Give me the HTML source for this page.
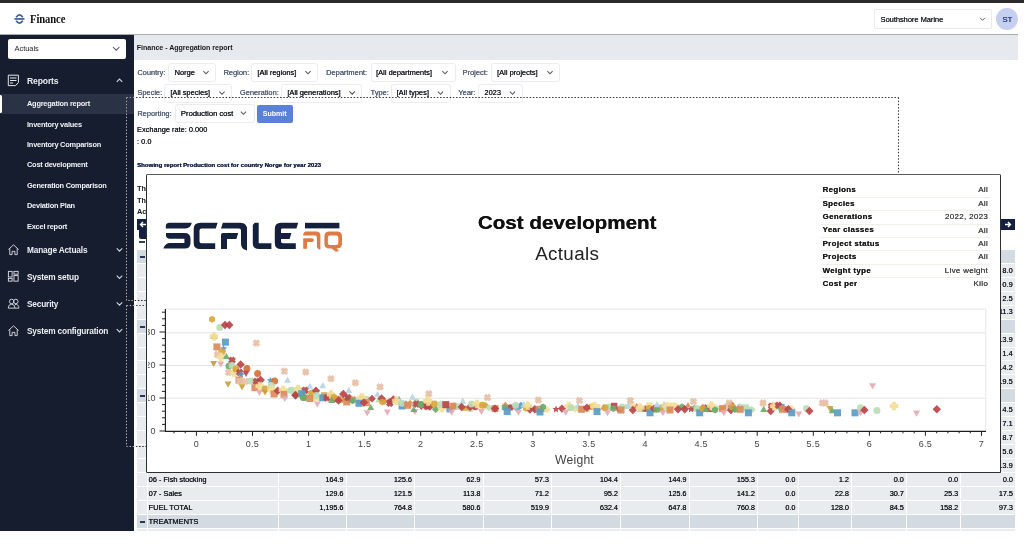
<!DOCTYPE html>
<html><head><meta charset="utf-8">
<style>
*{box-sizing:border-box}
html,body{margin:0;padding:0}
body{width:1024px;height:560px;overflow:hidden;position:relative;background:#fff;font-family:"Liberation Sans",sans-serif;color:#1b1f2a}
.a{position:absolute;white-space:nowrap;line-height:1}
svg.a{line-height:normal}
</style></head><body>
<div class="a" style="left:0px;top:0px;width:1024px;height:3px;background:#2b2b2b;"></div>
<div class="a" style="left:0px;top:34px;width:1018px;height:1px;background:#a9adb2;"></div>
<svg class="a" style="left:13px;top:12px" width="13" height="14" viewBox="0 0 13 14">
<path d="M3.2 5.2 Q6.5 0.6 9.8 5.2" fill="none" stroke="#3f5c8c" stroke-width="1.7"/>
<rect x="1.5" y="6.1" width="10" height="1.7" fill="#3f5c8c"/>
<path d="M3.2 8.8 Q6.5 13.4 9.8 8.8" fill="none" stroke="#3f5c8c" stroke-width="1.7"/>
</svg>
<div class="a" style="left:30.30px;top:12.57px;font-size:12.2px;color:#111;font-weight:bold;letter-spacing:-0.1px;font-family:'Liberation Serif',serif;transform:scaleX(0.87);transform-origin:0 0">Finance</div>
<div class="a" style="left:874px;top:9px;width:118px;height:20px;border:1px solid #e8eaee;border-radius:2px;background:#fff"></div>
<div class="a" style="left:880.50px;top:15.65px;font-size:7.5px;color:#22252c;font-weight:normal;letter-spacing:-0.05px;text-shadow:0.3px 0 0 #22252c">Southshore Marine</div>
<svg class="a" style="left:0;top:0;overflow:visible" width="1" height="1"><path d="M980.0 17.75 L982.5 20.25 L985.0 17.75" fill="none" stroke="#666" stroke-width="1"/></svg>
<div class="a" style="left:996.2px;top:8.1px;width:21.9px;height:21.9px;border-radius:50%;background:#c5d0f0"></div>
<div class="a" style="left:807.20px;width:400px;text-align:center;top:15.87px;font-size:7.6px;color:#33427a;font-weight:normal;letter-spacing:0px;text-shadow:0.45px 0 0 #33427a">ST</div>
<div class="a" style="left:0px;top:35px;width:134px;height:496px;background:#151d2f;"></div>
<div class="a" style="left:8px;top:39px;width:118px;height:19.5px;border-radius:2px;background:#fff"></div>
<div class="a" style="left:14.50px;top:45.15px;font-size:7.5px;color:#262626;font-weight:normal;letter-spacing:-0.05px;">Actuals</div>
<svg class="a" style="left:0;top:0;overflow:visible" width="1" height="1"><path d="M113.0 47.0 L116.2 50.2 L119.4 47.0" fill="none" stroke="#555" stroke-width="1.05"/></svg>
<svg class="a" style="left:7px;top:74px" width="14" height="13" viewBox="0 0 14 13">
<path d="M1.3 1.2 H11.4 V8.6 L8.6 11.6 H1.3 Z" fill="none" stroke="#e6e8ee" stroke-width="1"/>
<path d="M3 4 H9.5 M3 6.5 H9.5 M3 9 H6" stroke="#e6e8ee" stroke-width="1"/>
</svg>
<div class="a" style="left:27.00px;top:76.72px;font-size:8.6px;color:#eceef3;font-weight:bold;letter-spacing:-0.15px;">Reports</div>
<svg class="a" style="left:0;top:0;overflow:visible" width="1" height="1"><path d="M116.75 81.875 L119.5 79.125 L122.25 81.875" fill="none" stroke="#d0d4dc" stroke-width="1.1"/></svg>
<div class="a" style="left:0px;top:94px;width:134px;height:20px;background:#2a3246;"></div>
<div class="a" style="left:0;top:95px;width:2px;height:18px;background:#fff;border-radius:0 1.5px 1.5px 0"></div>
<div class="a" style="left:27.00px;top:100.04px;font-size:7.4px;color:#f0f2f6;font-weight:bold;letter-spacing:-0.22px;">Aggregation report</div>
<div class="a" style="left:27.00px;top:120.54px;font-size:7.4px;color:#f0f2f6;font-weight:bold;letter-spacing:-0.22px;">Inventory values</div>
<div class="a" style="left:27.00px;top:141.04px;font-size:7.4px;color:#f0f2f6;font-weight:bold;letter-spacing:-0.22px;">Inventory Comparison</div>
<div class="a" style="left:27.00px;top:161.44px;font-size:7.4px;color:#f0f2f6;font-weight:bold;letter-spacing:-0.22px;">Cost development</div>
<div class="a" style="left:27.00px;top:181.84px;font-size:7.4px;color:#f0f2f6;font-weight:bold;letter-spacing:-0.22px;">Generation Comparison</div>
<div class="a" style="left:27.00px;top:202.24px;font-size:7.4px;color:#f0f2f6;font-weight:bold;letter-spacing:-0.22px;">Deviation Plan</div>
<div class="a" style="left:27.00px;top:222.64px;font-size:7.4px;color:#f0f2f6;font-weight:bold;letter-spacing:-0.22px;">Excel report</div>
<div class="a" style="left:27.00px;top:245.97px;font-size:8.3px;color:#eceef3;font-weight:bold;letter-spacing:-0.18px;">Manage Actuals</div>
<svg class="a" style="left:0;top:0;overflow:visible" width="1" height="1"><path d="M116.75 248.425 L119.5 251.175 L122.25 248.425" fill="none" stroke="#d0d4dc" stroke-width="1.1"/></svg>
<svg class="a" style="left:7.3px;top:242.8px" width="13" height="13" viewBox="0 0 14 14">
<path d="M1.5 7 L7 2 L12.5 7 M3 5.8 V12.5 H5.5 V9 H8.5 V12.5 H11 V5.8" fill="none" stroke="#d8dbe3" stroke-width="1"/></svg>
<div class="a" style="left:27.00px;top:273.17px;font-size:8.3px;color:#eceef3;font-weight:bold;letter-spacing:-0.18px;">System setup</div>
<svg class="a" style="left:0;top:0;overflow:visible" width="1" height="1"><path d="M116.75 275.625 L119.5 278.375 L122.25 275.625" fill="none" stroke="#d0d4dc" stroke-width="1.1"/></svg>
<svg class="a" style="left:7.3px;top:270.0px" width="13" height="13" viewBox="0 0 14 14">
<rect x="1.5" y="1.5" width="4" height="6" fill="none" stroke="#d8dbe3" stroke-width="1"/>
<rect x="1.5" y="9" width="4" height="3" fill="none" stroke="#d8dbe3" stroke-width="1"/>
<rect x="7.5" y="1.5" width="4.5" height="3" fill="none" stroke="#d8dbe3" stroke-width="1"/>
<rect x="7.5" y="6" width="4.5" height="6" fill="none" stroke="#d8dbe3" stroke-width="1"/></svg>
<div class="a" style="left:27.00px;top:299.97px;font-size:8.3px;color:#eceef3;font-weight:bold;letter-spacing:-0.18px;">Security</div>
<svg class="a" style="left:0;top:0;overflow:visible" width="1" height="1"><path d="M116.75 302.425 L119.5 305.175 L122.25 302.425" fill="none" stroke="#d0d4dc" stroke-width="1.1"/></svg>
<svg class="a" style="left:7.3px;top:296.8px" width="13" height="13" viewBox="0 0 14 14">
<circle cx="5" cy="4.8" r="2.4" fill="none" stroke="#d8dbe3" stroke-width="1"/>
<circle cx="9.5" cy="4.8" r="2.4" fill="none" stroke="#d8dbe3" stroke-width="1"/>
<path d="M1.3 12 Q1.5 7.8 5 7.8 Q8.5 7.8 8.7 12 Z M8.5 8 Q12.7 7.6 12.8 12 H8.7" fill="none" stroke="#d8dbe3" stroke-width="1"/></svg>
<div class="a" style="left:27.00px;top:326.67px;font-size:8.3px;color:#eceef3;font-weight:bold;letter-spacing:-0.18px;">System configuration</div>
<svg class="a" style="left:0;top:0;overflow:visible" width="1" height="1"><path d="M116.75 329.125 L119.5 331.875 L122.25 329.125" fill="none" stroke="#d0d4dc" stroke-width="1.1"/></svg>
<svg class="a" style="left:7.3px;top:323.5px" width="13" height="13" viewBox="0 0 14 14">
<path d="M1.5 7 L7 2 L12.5 7 M3 5.8 V12.5 H5.5 V9 H8.5 V12.5 H11 V5.8" fill="none" stroke="#d8dbe3" stroke-width="1"/></svg>
<div class="a" style="left:134px;top:35px;width:884px;height:24.5px;background:#e6e9ed;"></div>
<div class="a" style="left:136.80px;top:44.89px;font-size:7.1px;color:#15181f;font-weight:bold;letter-spacing:-0.05px;">Finance - Aggregation report</div>
<div class="a" style="left:137.20px;top:69.09px;font-size:7.45px;color:#4f5c73;font-weight:normal;letter-spacing:0px;text-shadow:0.3px 0 0 currentColor">Country:</div>
<div class="a" style="left:167.5px;top:63.3px;width:48.5px;height:18.700000000000003px;border:1px solid #eaecef;border-radius:3px;background:#fff"></div>
<div class="a" style="left:174.50px;top:69.09px;font-size:7.45px;color:#15181f;font-weight:normal;letter-spacing:0px;text-shadow:0.3px 0 0 currentColor">Norge</div>
<svg class="a" style="left:0;top:0;overflow:visible" width="1" height="1"><path d="M203.4 71.2 L206 73.8 L208.6 71.2" fill="none" stroke="#555" stroke-width="1.05"/></svg>
<div class="a" style="left:223.40px;top:69.09px;font-size:7.45px;color:#4f5c73;font-weight:normal;letter-spacing:0px;text-shadow:0.3px 0 0 currentColor">Region:</div>
<div class="a" style="left:251px;top:63.3px;width:67px;height:18.700000000000003px;border:1px solid #eaecef;border-radius:3px;background:#fff"></div>
<div class="a" style="left:257.30px;top:69.09px;font-size:7.45px;color:#15181f;font-weight:normal;letter-spacing:0px;text-shadow:0.3px 0 0 currentColor">[All regions]</div>
<svg class="a" style="left:0;top:0;overflow:visible" width="1" height="1"><path d="M305.4 71.2 L308 73.8 L310.6 71.2" fill="none" stroke="#555" stroke-width="1.05"/></svg>
<div class="a" style="left:326.00px;top:69.09px;font-size:7.45px;color:#4f5c73;font-weight:normal;letter-spacing:0px;text-shadow:0.3px 0 0 currentColor">Department:</div>
<div class="a" style="left:370.5px;top:63.3px;width:85.0px;height:18.700000000000003px;border:1px solid #eaecef;border-radius:3px;background:#fff"></div>
<div class="a" style="left:376.00px;top:69.09px;font-size:7.45px;color:#15181f;font-weight:normal;letter-spacing:0px;text-shadow:0.3px 0 0 currentColor">[All departments]</div>
<svg class="a" style="left:0;top:0;overflow:visible" width="1" height="1"><path d="M442.4 71.2 L445 73.8 L447.6 71.2" fill="none" stroke="#555" stroke-width="1.05"/></svg>
<div class="a" style="left:462.50px;top:69.09px;font-size:7.45px;color:#4f5c73;font-weight:normal;letter-spacing:0px;text-shadow:0.3px 0 0 currentColor">Project:</div>
<div class="a" style="left:490.75px;top:63.3px;width:69.25px;height:18.700000000000003px;border:1px solid #eaecef;border-radius:3px;background:#fff"></div>
<div class="a" style="left:497.00px;top:69.09px;font-size:7.45px;color:#15181f;font-weight:normal;letter-spacing:0px;text-shadow:0.3px 0 0 currentColor">[All projects]</div>
<svg class="a" style="left:0;top:0;overflow:visible" width="1" height="1"><path d="M547.4 71.2 L550 73.8 L552.6 71.2" fill="none" stroke="#555" stroke-width="1.05"/></svg>
<div class="a" style="left:137.20px;top:89.29px;font-size:7.45px;color:#4f5c73;font-weight:normal;letter-spacing:0px;text-shadow:0.3px 0 0 currentColor">Specie:</div>
<div class="a" style="left:164.2px;top:83.5px;width:67.4px;height:19.799999999999997px;border:1px solid #eaecef;border-radius:3px;background:#fff"></div>
<div class="a" style="left:170.20px;top:89.29px;font-size:7.45px;color:#15181f;font-weight:normal;letter-spacing:0px;text-shadow:0.3px 0 0 currentColor">[All species]</div>
<svg class="a" style="left:0;top:0;overflow:visible" width="1" height="1"><path d="M219.4 91.7 L222 94.3 L224.6 91.7" fill="none" stroke="#555" stroke-width="1.05"/></svg>
<div class="a" style="left:239.80px;top:89.29px;font-size:7.45px;color:#4f5c73;font-weight:normal;letter-spacing:0px;text-shadow:0.3px 0 0 currentColor">Generation:</div>
<div class="a" style="left:281.3px;top:83.8px;width:81.09999999999997px;height:19.299999999999997px;border:1px solid #eaecef;border-radius:3px;background:#fff"></div>
<div class="a" style="left:287.20px;top:89.29px;font-size:7.45px;color:#15181f;font-weight:normal;letter-spacing:0px;text-shadow:0.3px 0 0 currentColor">[All generations]</div>
<svg class="a" style="left:0;top:0;overflow:visible" width="1" height="1"><path d="M349.45 91.425 L352.2 94.175 L354.95 91.425" fill="none" stroke="#555" stroke-width="1.05"/></svg>
<div class="a" style="left:370.50px;top:89.29px;font-size:7.45px;color:#4f5c73;font-weight:normal;letter-spacing:0px;text-shadow:0.3px 0 0 currentColor">Type:</div>
<div class="a" style="left:390.5px;top:83.75px;width:60.0px;height:19.25px;border:1px solid #eaecef;border-radius:3px;background:#fff"></div>
<div class="a" style="left:396.50px;top:89.29px;font-size:7.45px;color:#15181f;font-weight:normal;letter-spacing:0px;text-shadow:0.3px 0 0 currentColor">[All types]</div>
<svg class="a" style="left:0;top:0;overflow:visible" width="1" height="1"><path d="M437.9 91.7 L440.5 94.3 L443.1 91.7" fill="none" stroke="#555" stroke-width="1.05"/></svg>
<div class="a" style="left:458.25px;top:89.29px;font-size:7.45px;color:#4f5c73;font-weight:normal;letter-spacing:0px;text-shadow:0.3px 0 0 currentColor">Year:</div>
<div class="a" style="left:478px;top:83.75px;width:44.5px;height:19.25px;border:1px solid #eaecef;border-radius:3px;background:#fff"></div>
<div class="a" style="left:484.25px;top:89.29px;font-size:7.45px;color:#15181f;font-weight:normal;letter-spacing:0px;text-shadow:0.3px 0 0 currentColor">2023</div>
<svg class="a" style="left:0;top:0;overflow:visible" width="1" height="1"><path d="M509.9 91.7 L512.5 94.3 L515.1 91.7" fill="none" stroke="#555" stroke-width="1.05"/></svg>
<div class="a" style="left:137.20px;top:109.89px;font-size:7.45px;color:#4f5c73;font-weight:normal;letter-spacing:0px;text-shadow:0.3px 0 0 currentColor">Reporting:</div>
<div class="a" style="left:174.5px;top:104.3px;width:80.5px;height:18.900000000000006px;border:1px solid #eaecef;border-radius:3px;background:#fff"></div>
<div class="a" style="left:180.80px;top:109.77px;font-size:7.6px;color:#15181f;font-weight:normal;letter-spacing:0px;text-shadow:0.3px 0 0 currentColor">Production cost</div>
<svg class="a" style="left:0;top:0;overflow:visible" width="1" height="1"><path d="M240.9 111.7 L243.5 114.3 L246.1 111.7" fill="none" stroke="#555" stroke-width="1.05"/></svg>
<div class="a" style="left:256.6px;top:104.7px;width:36.1px;height:18.2px;border-radius:2px;background:#5b80d8"></div>
<div class="a" style="left:262.80px;top:110.79px;font-size:7.1px;color:#fff;font-weight:bold;letter-spacing:-0.05px;">Submit</div>
<div class="a" style="left:137.00px;top:125.94px;font-size:7.4px;color:#15181f;font-weight:normal;letter-spacing:0px;text-shadow:0.12px 0 0 #15181f">Exchange rate: 0.000</div>
<div class="a" style="left:137.00px;top:137.54px;font-size:7.4px;color:#15181f;font-weight:normal;letter-spacing:0px;text-shadow:0.12px 0 0 #15181f">: 0.0</div>
<div class="a" style="left:137.00px;top:162.44px;font-size:6.1px;color:#142048;font-weight:bold;letter-spacing:-0.02px;text-shadow:0.25px 0 0 #142048">Showing report Production cost for country Norge for year 2023</div>
<div class="a" style="left:137.00px;top:185.04px;font-size:7.4px;color:#15181f;font-weight:normal;letter-spacing:0px;text-shadow:0.12px 0 0 #15181f">The</div>
<div class="a" style="left:137.00px;top:196.74px;font-size:7.4px;color:#15181f;font-weight:normal;letter-spacing:0px;text-shadow:0.12px 0 0 #15181f">The</div>
<div class="a" style="left:137.00px;top:208.44px;font-size:7.4px;color:#15181f;font-weight:bold;letter-spacing:0px;">Act</div>
<div class="a" style="left:136.5px;top:219px;width:878.5px;height:11px;background:#142042;"></div>
<svg class="a" style="left:139px;top:221px" width="8" height="7" viewBox="0 0 8 7"><path d="M7 3.5 H1.8 M4 1 L1.5 3.5 L4 6" fill="none" stroke="#fff" stroke-width="1.4"/></svg>
<svg class="a" style="left:1004px;top:221px" width="8" height="7" viewBox="0 0 8 7"><path d="M1 3.5 H6.2 M4 1 L6.5 3.5 L4 6" fill="none" stroke="#fff" stroke-width="1.4"/></svg>
<div class="a" style="left:139px;top:229px;width:20px;height:10px;background:#142042;border-radius:0 0 2px 2px"></div>
<div class="a" style="left:139px;top:241.4px;width:5.599999999999994px;height:1.5999999999999943px;background:#34436a;"></div>
<div class="a" style="left:137px;top:250px;width:9.5px;height:13px;background:#d4dae1;"></div>
<div class="a" style="left:147.5px;top:250px;width:130.0px;height:13px;background:#d4dae1;"></div>
<div class="a" style="left:278.5px;top:250px;width:67.0px;height:13px;background:#d4dae1;"></div>
<div class="a" style="left:346.5px;top:250px;width:67.5px;height:13px;background:#d4dae1;"></div>
<div class="a" style="left:415px;top:250px;width:67.5px;height:13px;background:#d4dae1;"></div>
<div class="a" style="left:483.5px;top:250px;width:67.5px;height:13px;background:#d4dae1;"></div>
<div class="a" style="left:552px;top:250px;width:68px;height:13px;background:#d4dae1;"></div>
<div class="a" style="left:621px;top:250px;width:67.5px;height:13px;background:#d4dae1;"></div>
<div class="a" style="left:689.5px;top:250px;width:67.5px;height:13px;background:#d4dae1;"></div>
<div class="a" style="left:758px;top:250px;width:39.5px;height:13px;background:#d4dae1;"></div>
<div class="a" style="left:798.5px;top:250px;width:52.5px;height:13px;background:#d4dae1;"></div>
<div class="a" style="left:852px;top:250px;width:53.799999999999955px;height:13px;background:#d4dae1;"></div>
<div class="a" style="left:906.8px;top:250px;width:53.40000000000009px;height:13px;background:#d4dae1;"></div>
<div class="a" style="left:961.2px;top:250px;width:53.799999999999955px;height:13px;background:#d4dae1;"></div>
<div class="a" style="left:139.5px;top:256.2px;width:5.300000000000011px;height:1.6000000000000227px;background:#27355a;"></div>
<div class="a" style="left:137px;top:264px;width:9.5px;height:13px;background:#e9ecef;"></div>
<div class="a" style="left:147.5px;top:264px;width:130.0px;height:13px;background:#e9ecef;"></div>
<div class="a" style="left:278.5px;top:264px;width:67.0px;height:13px;background:#e9ecef;"></div>
<div class="a" style="left:346.5px;top:264px;width:67.5px;height:13px;background:#e9ecef;"></div>
<div class="a" style="left:415px;top:264px;width:67.5px;height:13px;background:#e9ecef;"></div>
<div class="a" style="left:483.5px;top:264px;width:67.5px;height:13px;background:#e9ecef;"></div>
<div class="a" style="left:552px;top:264px;width:68px;height:13px;background:#e9ecef;"></div>
<div class="a" style="left:621px;top:264px;width:67.5px;height:13px;background:#e9ecef;"></div>
<div class="a" style="left:689.5px;top:264px;width:67.5px;height:13px;background:#e9ecef;"></div>
<div class="a" style="left:758px;top:264px;width:39.5px;height:13px;background:#e9ecef;"></div>
<div class="a" style="left:798.5px;top:264px;width:52.5px;height:13px;background:#e9ecef;"></div>
<div class="a" style="left:852px;top:264px;width:53.799999999999955px;height:13px;background:#e9ecef;"></div>
<div class="a" style="left:906.8px;top:264px;width:53.40000000000009px;height:13px;background:#e9ecef;"></div>
<div class="a" style="left:961.2px;top:264px;width:53.799999999999955px;height:13px;background:#e9ecef;"></div>
<div class="a" style="right:11.40px;top:266.67px;font-size:7.4px;color:#15181f;font-weight:normal;letter-spacing:0px;text-shadow:0.2px 0 0 #15181f">8.0</div>
<div class="a" style="left:137px;top:278px;width:9.5px;height:13px;background:#e9ecef;"></div>
<div class="a" style="left:147.5px;top:278px;width:130.0px;height:13px;background:#e9ecef;"></div>
<div class="a" style="left:278.5px;top:278px;width:67.0px;height:13px;background:#e9ecef;"></div>
<div class="a" style="left:346.5px;top:278px;width:67.5px;height:13px;background:#e9ecef;"></div>
<div class="a" style="left:415px;top:278px;width:67.5px;height:13px;background:#e9ecef;"></div>
<div class="a" style="left:483.5px;top:278px;width:67.5px;height:13px;background:#e9ecef;"></div>
<div class="a" style="left:552px;top:278px;width:68px;height:13px;background:#e9ecef;"></div>
<div class="a" style="left:621px;top:278px;width:67.5px;height:13px;background:#e9ecef;"></div>
<div class="a" style="left:689.5px;top:278px;width:67.5px;height:13px;background:#e9ecef;"></div>
<div class="a" style="left:758px;top:278px;width:39.5px;height:13px;background:#e9ecef;"></div>
<div class="a" style="left:798.5px;top:278px;width:52.5px;height:13px;background:#e9ecef;"></div>
<div class="a" style="left:852px;top:278px;width:53.799999999999955px;height:13px;background:#e9ecef;"></div>
<div class="a" style="left:906.8px;top:278px;width:53.40000000000009px;height:13px;background:#e9ecef;"></div>
<div class="a" style="left:961.2px;top:278px;width:53.799999999999955px;height:13px;background:#e9ecef;"></div>
<div class="a" style="right:11.40px;top:280.60px;font-size:7.4px;color:#15181f;font-weight:normal;letter-spacing:0px;text-shadow:0.2px 0 0 #15181f">0.9</div>
<div class="a" style="left:137px;top:292px;width:9.5px;height:13px;background:#e9ecef;"></div>
<div class="a" style="left:147.5px;top:292px;width:130.0px;height:13px;background:#e9ecef;"></div>
<div class="a" style="left:278.5px;top:292px;width:67.0px;height:13px;background:#e9ecef;"></div>
<div class="a" style="left:346.5px;top:292px;width:67.5px;height:13px;background:#e9ecef;"></div>
<div class="a" style="left:415px;top:292px;width:67.5px;height:13px;background:#e9ecef;"></div>
<div class="a" style="left:483.5px;top:292px;width:67.5px;height:13px;background:#e9ecef;"></div>
<div class="a" style="left:552px;top:292px;width:68px;height:13px;background:#e9ecef;"></div>
<div class="a" style="left:621px;top:292px;width:67.5px;height:13px;background:#e9ecef;"></div>
<div class="a" style="left:689.5px;top:292px;width:67.5px;height:13px;background:#e9ecef;"></div>
<div class="a" style="left:758px;top:292px;width:39.5px;height:13px;background:#e9ecef;"></div>
<div class="a" style="left:798.5px;top:292px;width:52.5px;height:13px;background:#e9ecef;"></div>
<div class="a" style="left:852px;top:292px;width:53.799999999999955px;height:13px;background:#e9ecef;"></div>
<div class="a" style="left:906.8px;top:292px;width:53.40000000000009px;height:13px;background:#e9ecef;"></div>
<div class="a" style="left:961.2px;top:292px;width:53.799999999999955px;height:13px;background:#e9ecef;"></div>
<div class="a" style="right:11.40px;top:294.53px;font-size:7.4px;color:#15181f;font-weight:normal;letter-spacing:0px;text-shadow:0.2px 0 0 #15181f">2.5</div>
<div class="a" style="left:137px;top:306px;width:9.5px;height:13px;background:#e9ecef;"></div>
<div class="a" style="left:147.5px;top:306px;width:130.0px;height:13px;background:#e9ecef;"></div>
<div class="a" style="left:278.5px;top:306px;width:67.0px;height:13px;background:#e9ecef;"></div>
<div class="a" style="left:346.5px;top:306px;width:67.5px;height:13px;background:#e9ecef;"></div>
<div class="a" style="left:415px;top:306px;width:67.5px;height:13px;background:#e9ecef;"></div>
<div class="a" style="left:483.5px;top:306px;width:67.5px;height:13px;background:#e9ecef;"></div>
<div class="a" style="left:552px;top:306px;width:68px;height:13px;background:#e9ecef;"></div>
<div class="a" style="left:621px;top:306px;width:67.5px;height:13px;background:#e9ecef;"></div>
<div class="a" style="left:689.5px;top:306px;width:67.5px;height:13px;background:#e9ecef;"></div>
<div class="a" style="left:758px;top:306px;width:39.5px;height:13px;background:#e9ecef;"></div>
<div class="a" style="left:798.5px;top:306px;width:52.5px;height:13px;background:#e9ecef;"></div>
<div class="a" style="left:852px;top:306px;width:53.799999999999955px;height:13px;background:#e9ecef;"></div>
<div class="a" style="left:906.8px;top:306px;width:53.40000000000009px;height:13px;background:#e9ecef;"></div>
<div class="a" style="left:961.2px;top:306px;width:53.799999999999955px;height:13px;background:#e9ecef;"></div>
<div class="a" style="right:11.40px;top:308.46px;font-size:7.4px;color:#15181f;font-weight:normal;letter-spacing:0px;text-shadow:0.2px 0 0 #15181f">11.3</div>
<div class="a" style="left:137px;top:320px;width:9.5px;height:13px;background:#d4dae1;"></div>
<div class="a" style="left:147.5px;top:320px;width:130.0px;height:13px;background:#d4dae1;"></div>
<div class="a" style="left:278.5px;top:320px;width:67.0px;height:13px;background:#d4dae1;"></div>
<div class="a" style="left:346.5px;top:320px;width:67.5px;height:13px;background:#d4dae1;"></div>
<div class="a" style="left:415px;top:320px;width:67.5px;height:13px;background:#d4dae1;"></div>
<div class="a" style="left:483.5px;top:320px;width:67.5px;height:13px;background:#d4dae1;"></div>
<div class="a" style="left:552px;top:320px;width:68px;height:13px;background:#d4dae1;"></div>
<div class="a" style="left:621px;top:320px;width:67.5px;height:13px;background:#d4dae1;"></div>
<div class="a" style="left:689.5px;top:320px;width:67.5px;height:13px;background:#d4dae1;"></div>
<div class="a" style="left:758px;top:320px;width:39.5px;height:13px;background:#d4dae1;"></div>
<div class="a" style="left:798.5px;top:320px;width:52.5px;height:13px;background:#d4dae1;"></div>
<div class="a" style="left:852px;top:320px;width:53.799999999999955px;height:13px;background:#d4dae1;"></div>
<div class="a" style="left:906.8px;top:320px;width:53.40000000000009px;height:13px;background:#d4dae1;"></div>
<div class="a" style="left:961.2px;top:320px;width:53.799999999999955px;height:13px;background:#d4dae1;"></div>
<div class="a" style="left:139.5px;top:326.2px;width:5.300000000000011px;height:1.6000000000000227px;background:#27355a;"></div>
<div class="a" style="left:137px;top:334px;width:9.5px;height:13px;background:#e9ecef;"></div>
<div class="a" style="left:147.5px;top:334px;width:130.0px;height:13px;background:#e9ecef;"></div>
<div class="a" style="left:278.5px;top:334px;width:67.0px;height:13px;background:#e9ecef;"></div>
<div class="a" style="left:346.5px;top:334px;width:67.5px;height:13px;background:#e9ecef;"></div>
<div class="a" style="left:415px;top:334px;width:67.5px;height:13px;background:#e9ecef;"></div>
<div class="a" style="left:483.5px;top:334px;width:67.5px;height:13px;background:#e9ecef;"></div>
<div class="a" style="left:552px;top:334px;width:68px;height:13px;background:#e9ecef;"></div>
<div class="a" style="left:621px;top:334px;width:67.5px;height:13px;background:#e9ecef;"></div>
<div class="a" style="left:689.5px;top:334px;width:67.5px;height:13px;background:#e9ecef;"></div>
<div class="a" style="left:758px;top:334px;width:39.5px;height:13px;background:#e9ecef;"></div>
<div class="a" style="left:798.5px;top:334px;width:52.5px;height:13px;background:#e9ecef;"></div>
<div class="a" style="left:852px;top:334px;width:53.799999999999955px;height:13px;background:#e9ecef;"></div>
<div class="a" style="left:906.8px;top:334px;width:53.40000000000009px;height:13px;background:#e9ecef;"></div>
<div class="a" style="left:961.2px;top:334px;width:53.799999999999955px;height:13px;background:#e9ecef;"></div>
<div class="a" style="right:11.40px;top:336.32px;font-size:7.4px;color:#15181f;font-weight:normal;letter-spacing:0px;text-shadow:0.2px 0 0 #15181f">13.9</div>
<div class="a" style="left:137px;top:348px;width:9.5px;height:12px;background:#e9ecef;"></div>
<div class="a" style="left:147.5px;top:348px;width:130.0px;height:12px;background:#e9ecef;"></div>
<div class="a" style="left:278.5px;top:348px;width:67.0px;height:12px;background:#e9ecef;"></div>
<div class="a" style="left:346.5px;top:348px;width:67.5px;height:12px;background:#e9ecef;"></div>
<div class="a" style="left:415px;top:348px;width:67.5px;height:12px;background:#e9ecef;"></div>
<div class="a" style="left:483.5px;top:348px;width:67.5px;height:12px;background:#e9ecef;"></div>
<div class="a" style="left:552px;top:348px;width:68px;height:12px;background:#e9ecef;"></div>
<div class="a" style="left:621px;top:348px;width:67.5px;height:12px;background:#e9ecef;"></div>
<div class="a" style="left:689.5px;top:348px;width:67.5px;height:12px;background:#e9ecef;"></div>
<div class="a" style="left:758px;top:348px;width:39.5px;height:12px;background:#e9ecef;"></div>
<div class="a" style="left:798.5px;top:348px;width:52.5px;height:12px;background:#e9ecef;"></div>
<div class="a" style="left:852px;top:348px;width:53.799999999999955px;height:12px;background:#e9ecef;"></div>
<div class="a" style="left:906.8px;top:348px;width:53.40000000000009px;height:12px;background:#e9ecef;"></div>
<div class="a" style="left:961.2px;top:348px;width:53.799999999999955px;height:12px;background:#e9ecef;"></div>
<div class="a" style="right:11.40px;top:350.25px;font-size:7.4px;color:#15181f;font-weight:normal;letter-spacing:0px;text-shadow:0.2px 0 0 #15181f">1.4</div>
<div class="a" style="left:137px;top:361px;width:9.5px;height:13px;background:#e9ecef;"></div>
<div class="a" style="left:147.5px;top:361px;width:130.0px;height:13px;background:#e9ecef;"></div>
<div class="a" style="left:278.5px;top:361px;width:67.0px;height:13px;background:#e9ecef;"></div>
<div class="a" style="left:346.5px;top:361px;width:67.5px;height:13px;background:#e9ecef;"></div>
<div class="a" style="left:415px;top:361px;width:67.5px;height:13px;background:#e9ecef;"></div>
<div class="a" style="left:483.5px;top:361px;width:67.5px;height:13px;background:#e9ecef;"></div>
<div class="a" style="left:552px;top:361px;width:68px;height:13px;background:#e9ecef;"></div>
<div class="a" style="left:621px;top:361px;width:67.5px;height:13px;background:#e9ecef;"></div>
<div class="a" style="left:689.5px;top:361px;width:67.5px;height:13px;background:#e9ecef;"></div>
<div class="a" style="left:758px;top:361px;width:39.5px;height:13px;background:#e9ecef;"></div>
<div class="a" style="left:798.5px;top:361px;width:52.5px;height:13px;background:#e9ecef;"></div>
<div class="a" style="left:852px;top:361px;width:53.799999999999955px;height:13px;background:#e9ecef;"></div>
<div class="a" style="left:906.8px;top:361px;width:53.40000000000009px;height:13px;background:#e9ecef;"></div>
<div class="a" style="left:961.2px;top:361px;width:53.799999999999955px;height:13px;background:#e9ecef;"></div>
<div class="a" style="right:11.40px;top:364.18px;font-size:7.4px;color:#15181f;font-weight:normal;letter-spacing:0px;text-shadow:0.2px 0 0 #15181f">14.2</div>
<div class="a" style="left:137px;top:375px;width:9.5px;height:13px;background:#e9ecef;"></div>
<div class="a" style="left:147.5px;top:375px;width:130.0px;height:13px;background:#e9ecef;"></div>
<div class="a" style="left:278.5px;top:375px;width:67.0px;height:13px;background:#e9ecef;"></div>
<div class="a" style="left:346.5px;top:375px;width:67.5px;height:13px;background:#e9ecef;"></div>
<div class="a" style="left:415px;top:375px;width:67.5px;height:13px;background:#e9ecef;"></div>
<div class="a" style="left:483.5px;top:375px;width:67.5px;height:13px;background:#e9ecef;"></div>
<div class="a" style="left:552px;top:375px;width:68px;height:13px;background:#e9ecef;"></div>
<div class="a" style="left:621px;top:375px;width:67.5px;height:13px;background:#e9ecef;"></div>
<div class="a" style="left:689.5px;top:375px;width:67.5px;height:13px;background:#e9ecef;"></div>
<div class="a" style="left:758px;top:375px;width:39.5px;height:13px;background:#e9ecef;"></div>
<div class="a" style="left:798.5px;top:375px;width:52.5px;height:13px;background:#e9ecef;"></div>
<div class="a" style="left:852px;top:375px;width:53.799999999999955px;height:13px;background:#e9ecef;"></div>
<div class="a" style="left:906.8px;top:375px;width:53.40000000000009px;height:13px;background:#e9ecef;"></div>
<div class="a" style="left:961.2px;top:375px;width:53.799999999999955px;height:13px;background:#e9ecef;"></div>
<div class="a" style="right:11.40px;top:378.11px;font-size:7.4px;color:#15181f;font-weight:normal;letter-spacing:0px;text-shadow:0.2px 0 0 #15181f">19.5</div>
<div class="a" style="left:137px;top:389px;width:9.5px;height:13px;background:#d4dae1;"></div>
<div class="a" style="left:147.5px;top:389px;width:130.0px;height:13px;background:#d4dae1;"></div>
<div class="a" style="left:278.5px;top:389px;width:67.0px;height:13px;background:#d4dae1;"></div>
<div class="a" style="left:346.5px;top:389px;width:67.5px;height:13px;background:#d4dae1;"></div>
<div class="a" style="left:415px;top:389px;width:67.5px;height:13px;background:#d4dae1;"></div>
<div class="a" style="left:483.5px;top:389px;width:67.5px;height:13px;background:#d4dae1;"></div>
<div class="a" style="left:552px;top:389px;width:68px;height:13px;background:#d4dae1;"></div>
<div class="a" style="left:621px;top:389px;width:67.5px;height:13px;background:#d4dae1;"></div>
<div class="a" style="left:689.5px;top:389px;width:67.5px;height:13px;background:#d4dae1;"></div>
<div class="a" style="left:758px;top:389px;width:39.5px;height:13px;background:#d4dae1;"></div>
<div class="a" style="left:798.5px;top:389px;width:52.5px;height:13px;background:#d4dae1;"></div>
<div class="a" style="left:852px;top:389px;width:53.799999999999955px;height:13px;background:#d4dae1;"></div>
<div class="a" style="left:906.8px;top:389px;width:53.40000000000009px;height:13px;background:#d4dae1;"></div>
<div class="a" style="left:961.2px;top:389px;width:53.799999999999955px;height:13px;background:#d4dae1;"></div>
<div class="a" style="left:139.5px;top:395.2px;width:5.300000000000011px;height:1.6000000000000227px;background:#27355a;"></div>
<div class="a" style="left:137px;top:403px;width:9.5px;height:13px;background:#e9ecef;"></div>
<div class="a" style="left:147.5px;top:403px;width:130.0px;height:13px;background:#e9ecef;"></div>
<div class="a" style="left:278.5px;top:403px;width:67.0px;height:13px;background:#e9ecef;"></div>
<div class="a" style="left:346.5px;top:403px;width:67.5px;height:13px;background:#e9ecef;"></div>
<div class="a" style="left:415px;top:403px;width:67.5px;height:13px;background:#e9ecef;"></div>
<div class="a" style="left:483.5px;top:403px;width:67.5px;height:13px;background:#e9ecef;"></div>
<div class="a" style="left:552px;top:403px;width:68px;height:13px;background:#e9ecef;"></div>
<div class="a" style="left:621px;top:403px;width:67.5px;height:13px;background:#e9ecef;"></div>
<div class="a" style="left:689.5px;top:403px;width:67.5px;height:13px;background:#e9ecef;"></div>
<div class="a" style="left:758px;top:403px;width:39.5px;height:13px;background:#e9ecef;"></div>
<div class="a" style="left:798.5px;top:403px;width:52.5px;height:13px;background:#e9ecef;"></div>
<div class="a" style="left:852px;top:403px;width:53.799999999999955px;height:13px;background:#e9ecef;"></div>
<div class="a" style="left:906.8px;top:403px;width:53.40000000000009px;height:13px;background:#e9ecef;"></div>
<div class="a" style="left:961.2px;top:403px;width:53.799999999999955px;height:13px;background:#e9ecef;"></div>
<div class="a" style="right:11.40px;top:405.97px;font-size:7.4px;color:#15181f;font-weight:normal;letter-spacing:0px;text-shadow:0.2px 0 0 #15181f">4.5</div>
<div class="a" style="left:137px;top:417px;width:9.5px;height:13px;background:#e9ecef;"></div>
<div class="a" style="left:147.5px;top:417px;width:130.0px;height:13px;background:#e9ecef;"></div>
<div class="a" style="left:278.5px;top:417px;width:67.0px;height:13px;background:#e9ecef;"></div>
<div class="a" style="left:346.5px;top:417px;width:67.5px;height:13px;background:#e9ecef;"></div>
<div class="a" style="left:415px;top:417px;width:67.5px;height:13px;background:#e9ecef;"></div>
<div class="a" style="left:483.5px;top:417px;width:67.5px;height:13px;background:#e9ecef;"></div>
<div class="a" style="left:552px;top:417px;width:68px;height:13px;background:#e9ecef;"></div>
<div class="a" style="left:621px;top:417px;width:67.5px;height:13px;background:#e9ecef;"></div>
<div class="a" style="left:689.5px;top:417px;width:67.5px;height:13px;background:#e9ecef;"></div>
<div class="a" style="left:758px;top:417px;width:39.5px;height:13px;background:#e9ecef;"></div>
<div class="a" style="left:798.5px;top:417px;width:52.5px;height:13px;background:#e9ecef;"></div>
<div class="a" style="left:852px;top:417px;width:53.799999999999955px;height:13px;background:#e9ecef;"></div>
<div class="a" style="left:906.8px;top:417px;width:53.40000000000009px;height:13px;background:#e9ecef;"></div>
<div class="a" style="left:961.2px;top:417px;width:53.799999999999955px;height:13px;background:#e9ecef;"></div>
<div class="a" style="right:11.40px;top:419.90px;font-size:7.4px;color:#15181f;font-weight:normal;letter-spacing:0px;text-shadow:0.2px 0 0 #15181f">7.1</div>
<div class="a" style="left:137px;top:431px;width:9.5px;height:13px;background:#e9ecef;"></div>
<div class="a" style="left:147.5px;top:431px;width:130.0px;height:13px;background:#e9ecef;"></div>
<div class="a" style="left:278.5px;top:431px;width:67.0px;height:13px;background:#e9ecef;"></div>
<div class="a" style="left:346.5px;top:431px;width:67.5px;height:13px;background:#e9ecef;"></div>
<div class="a" style="left:415px;top:431px;width:67.5px;height:13px;background:#e9ecef;"></div>
<div class="a" style="left:483.5px;top:431px;width:67.5px;height:13px;background:#e9ecef;"></div>
<div class="a" style="left:552px;top:431px;width:68px;height:13px;background:#e9ecef;"></div>
<div class="a" style="left:621px;top:431px;width:67.5px;height:13px;background:#e9ecef;"></div>
<div class="a" style="left:689.5px;top:431px;width:67.5px;height:13px;background:#e9ecef;"></div>
<div class="a" style="left:758px;top:431px;width:39.5px;height:13px;background:#e9ecef;"></div>
<div class="a" style="left:798.5px;top:431px;width:52.5px;height:13px;background:#e9ecef;"></div>
<div class="a" style="left:852px;top:431px;width:53.799999999999955px;height:13px;background:#e9ecef;"></div>
<div class="a" style="left:906.8px;top:431px;width:53.40000000000009px;height:13px;background:#e9ecef;"></div>
<div class="a" style="left:961.2px;top:431px;width:53.799999999999955px;height:13px;background:#e9ecef;"></div>
<div class="a" style="right:11.40px;top:433.83px;font-size:7.4px;color:#15181f;font-weight:normal;letter-spacing:0px;text-shadow:0.2px 0 0 #15181f">8.7</div>
<div class="a" style="left:137px;top:445px;width:9.5px;height:13px;background:#e9ecef;"></div>
<div class="a" style="left:147.5px;top:445px;width:130.0px;height:13px;background:#e9ecef;"></div>
<div class="a" style="left:278.5px;top:445px;width:67.0px;height:13px;background:#e9ecef;"></div>
<div class="a" style="left:346.5px;top:445px;width:67.5px;height:13px;background:#e9ecef;"></div>
<div class="a" style="left:415px;top:445px;width:67.5px;height:13px;background:#e9ecef;"></div>
<div class="a" style="left:483.5px;top:445px;width:67.5px;height:13px;background:#e9ecef;"></div>
<div class="a" style="left:552px;top:445px;width:68px;height:13px;background:#e9ecef;"></div>
<div class="a" style="left:621px;top:445px;width:67.5px;height:13px;background:#e9ecef;"></div>
<div class="a" style="left:689.5px;top:445px;width:67.5px;height:13px;background:#e9ecef;"></div>
<div class="a" style="left:758px;top:445px;width:39.5px;height:13px;background:#e9ecef;"></div>
<div class="a" style="left:798.5px;top:445px;width:52.5px;height:13px;background:#e9ecef;"></div>
<div class="a" style="left:852px;top:445px;width:53.799999999999955px;height:13px;background:#e9ecef;"></div>
<div class="a" style="left:906.8px;top:445px;width:53.40000000000009px;height:13px;background:#e9ecef;"></div>
<div class="a" style="left:961.2px;top:445px;width:53.799999999999955px;height:13px;background:#e9ecef;"></div>
<div class="a" style="right:11.40px;top:447.76px;font-size:7.4px;color:#15181f;font-weight:normal;letter-spacing:0px;text-shadow:0.2px 0 0 #15181f">5.6</div>
<div class="a" style="left:137px;top:459px;width:9.5px;height:13px;background:#e9ecef;"></div>
<div class="a" style="left:147.5px;top:459px;width:130.0px;height:13px;background:#e9ecef;"></div>
<div class="a" style="left:278.5px;top:459px;width:67.0px;height:13px;background:#e9ecef;"></div>
<div class="a" style="left:346.5px;top:459px;width:67.5px;height:13px;background:#e9ecef;"></div>
<div class="a" style="left:415px;top:459px;width:67.5px;height:13px;background:#e9ecef;"></div>
<div class="a" style="left:483.5px;top:459px;width:67.5px;height:13px;background:#e9ecef;"></div>
<div class="a" style="left:552px;top:459px;width:68px;height:13px;background:#e9ecef;"></div>
<div class="a" style="left:621px;top:459px;width:67.5px;height:13px;background:#e9ecef;"></div>
<div class="a" style="left:689.5px;top:459px;width:67.5px;height:13px;background:#e9ecef;"></div>
<div class="a" style="left:758px;top:459px;width:39.5px;height:13px;background:#e9ecef;"></div>
<div class="a" style="left:798.5px;top:459px;width:52.5px;height:13px;background:#e9ecef;"></div>
<div class="a" style="left:852px;top:459px;width:53.799999999999955px;height:13px;background:#e9ecef;"></div>
<div class="a" style="left:906.8px;top:459px;width:53.40000000000009px;height:13px;background:#e9ecef;"></div>
<div class="a" style="left:961.2px;top:459px;width:53.799999999999955px;height:13px;background:#e9ecef;"></div>
<div class="a" style="right:11.40px;top:461.69px;font-size:7.4px;color:#15181f;font-weight:normal;letter-spacing:0px;text-shadow:0.2px 0 0 #15181f">13.9</div>
<div class="a" style="left:137px;top:473px;width:9.5px;height:13px;background:#e9ecef;"></div>
<div class="a" style="left:147.5px;top:473px;width:130.0px;height:13px;background:#e9ecef;"></div>
<div class="a" style="left:278.5px;top:473px;width:67.0px;height:13px;background:#e9ecef;"></div>
<div class="a" style="left:346.5px;top:473px;width:67.5px;height:13px;background:#e9ecef;"></div>
<div class="a" style="left:415px;top:473px;width:67.5px;height:13px;background:#e9ecef;"></div>
<div class="a" style="left:483.5px;top:473px;width:67.5px;height:13px;background:#e9ecef;"></div>
<div class="a" style="left:552px;top:473px;width:68px;height:13px;background:#e9ecef;"></div>
<div class="a" style="left:621px;top:473px;width:67.5px;height:13px;background:#e9ecef;"></div>
<div class="a" style="left:689.5px;top:473px;width:67.5px;height:13px;background:#e9ecef;"></div>
<div class="a" style="left:758px;top:473px;width:39.5px;height:13px;background:#e9ecef;"></div>
<div class="a" style="left:798.5px;top:473px;width:52.5px;height:13px;background:#e9ecef;"></div>
<div class="a" style="left:852px;top:473px;width:53.799999999999955px;height:13px;background:#e9ecef;"></div>
<div class="a" style="left:906.8px;top:473px;width:53.40000000000009px;height:13px;background:#e9ecef;"></div>
<div class="a" style="left:961.2px;top:473px;width:53.799999999999955px;height:13px;background:#e9ecef;"></div>
<div class="a" style="left:137px;top:487px;width:9.5px;height:13px;background:#e9ecef;"></div>
<div class="a" style="left:147.5px;top:487px;width:130.0px;height:13px;background:#e9ecef;"></div>
<div class="a" style="left:278.5px;top:487px;width:67.0px;height:13px;background:#e9ecef;"></div>
<div class="a" style="left:346.5px;top:487px;width:67.5px;height:13px;background:#e9ecef;"></div>
<div class="a" style="left:415px;top:487px;width:67.5px;height:13px;background:#e9ecef;"></div>
<div class="a" style="left:483.5px;top:487px;width:67.5px;height:13px;background:#e9ecef;"></div>
<div class="a" style="left:552px;top:487px;width:68px;height:13px;background:#e9ecef;"></div>
<div class="a" style="left:621px;top:487px;width:67.5px;height:13px;background:#e9ecef;"></div>
<div class="a" style="left:689.5px;top:487px;width:67.5px;height:13px;background:#e9ecef;"></div>
<div class="a" style="left:758px;top:487px;width:39.5px;height:13px;background:#e9ecef;"></div>
<div class="a" style="left:798.5px;top:487px;width:52.5px;height:13px;background:#e9ecef;"></div>
<div class="a" style="left:852px;top:487px;width:53.799999999999955px;height:13px;background:#e9ecef;"></div>
<div class="a" style="left:906.8px;top:487px;width:53.40000000000009px;height:13px;background:#e9ecef;"></div>
<div class="a" style="left:961.2px;top:487px;width:53.799999999999955px;height:13px;background:#e9ecef;"></div>
<div class="a" style="left:137px;top:501px;width:9.5px;height:13px;background:#e9ecef;"></div>
<div class="a" style="left:147.5px;top:501px;width:130.0px;height:13px;background:#e9ecef;"></div>
<div class="a" style="left:278.5px;top:501px;width:67.0px;height:13px;background:#e9ecef;"></div>
<div class="a" style="left:346.5px;top:501px;width:67.5px;height:13px;background:#e9ecef;"></div>
<div class="a" style="left:415px;top:501px;width:67.5px;height:13px;background:#e9ecef;"></div>
<div class="a" style="left:483.5px;top:501px;width:67.5px;height:13px;background:#e9ecef;"></div>
<div class="a" style="left:552px;top:501px;width:68px;height:13px;background:#e9ecef;"></div>
<div class="a" style="left:621px;top:501px;width:67.5px;height:13px;background:#e9ecef;"></div>
<div class="a" style="left:689.5px;top:501px;width:67.5px;height:13px;background:#e9ecef;"></div>
<div class="a" style="left:758px;top:501px;width:39.5px;height:13px;background:#e9ecef;"></div>
<div class="a" style="left:798.5px;top:501px;width:52.5px;height:13px;background:#e9ecef;"></div>
<div class="a" style="left:852px;top:501px;width:53.799999999999955px;height:13px;background:#e9ecef;"></div>
<div class="a" style="left:906.8px;top:501px;width:53.40000000000009px;height:13px;background:#e9ecef;"></div>
<div class="a" style="left:961.2px;top:501px;width:53.799999999999955px;height:13px;background:#e9ecef;"></div>
<div class="a" style="left:137px;top:515px;width:9.5px;height:13px;background:#d4dae1;"></div>
<div class="a" style="left:147.5px;top:515px;width:130.0px;height:13px;background:#d4dae1;"></div>
<div class="a" style="left:278.5px;top:515px;width:67.0px;height:13px;background:#d4dae1;"></div>
<div class="a" style="left:346.5px;top:515px;width:67.5px;height:13px;background:#d4dae1;"></div>
<div class="a" style="left:415px;top:515px;width:67.5px;height:13px;background:#d4dae1;"></div>
<div class="a" style="left:483.5px;top:515px;width:67.5px;height:13px;background:#d4dae1;"></div>
<div class="a" style="left:552px;top:515px;width:68px;height:13px;background:#d4dae1;"></div>
<div class="a" style="left:621px;top:515px;width:67.5px;height:13px;background:#d4dae1;"></div>
<div class="a" style="left:689.5px;top:515px;width:67.5px;height:13px;background:#d4dae1;"></div>
<div class="a" style="left:758px;top:515px;width:39.5px;height:13px;background:#d4dae1;"></div>
<div class="a" style="left:798.5px;top:515px;width:52.5px;height:13px;background:#d4dae1;"></div>
<div class="a" style="left:852px;top:515px;width:53.799999999999955px;height:13px;background:#d4dae1;"></div>
<div class="a" style="left:906.8px;top:515px;width:53.40000000000009px;height:13px;background:#d4dae1;"></div>
<div class="a" style="left:961.2px;top:515px;width:53.799999999999955px;height:13px;background:#d4dae1;"></div>
<div class="a" style="left:139.5px;top:521.2px;width:5.300000000000011px;height:1.599999999999909px;background:#27355a;"></div>
<div class="a" style="left:137px;top:529px;width:9.5px;height:2px;background:#e9ecef;"></div>
<div class="a" style="left:147.5px;top:529px;width:130.0px;height:2px;background:#e9ecef;"></div>
<div class="a" style="left:278.5px;top:529px;width:67.0px;height:2px;background:#e9ecef;"></div>
<div class="a" style="left:346.5px;top:529px;width:67.5px;height:2px;background:#e9ecef;"></div>
<div class="a" style="left:415px;top:529px;width:67.5px;height:2px;background:#e9ecef;"></div>
<div class="a" style="left:483.5px;top:529px;width:67.5px;height:2px;background:#e9ecef;"></div>
<div class="a" style="left:552px;top:529px;width:68px;height:2px;background:#e9ecef;"></div>
<div class="a" style="left:621px;top:529px;width:67.5px;height:2px;background:#e9ecef;"></div>
<div class="a" style="left:689.5px;top:529px;width:67.5px;height:2px;background:#e9ecef;"></div>
<div class="a" style="left:758px;top:529px;width:39.5px;height:2px;background:#e9ecef;"></div>
<div class="a" style="left:798.5px;top:529px;width:52.5px;height:2px;background:#e9ecef;"></div>
<div class="a" style="left:852px;top:529px;width:53.799999999999955px;height:2px;background:#e9ecef;"></div>
<div class="a" style="left:906.8px;top:529px;width:53.40000000000009px;height:2px;background:#e9ecef;"></div>
<div class="a" style="left:961.2px;top:529px;width:53.799999999999955px;height:2px;background:#e9ecef;"></div>
<div class="a" style="left:148.50px;top:476.13px;font-size:7.5px;color:#15181f;font-weight:normal;letter-spacing:-0.05px;text-shadow:0.3px 0 0 #15181f">06 - Fish stocking</div>
<div class="a" style="right:680.70px;top:476.30px;font-size:7.3px;color:#15181f;font-weight:normal;letter-spacing:-0.05px;text-shadow:0.3px 0 0 #15181f">164.9</div>
<div class="a" style="right:612.20px;top:476.30px;font-size:7.3px;color:#15181f;font-weight:normal;letter-spacing:-0.05px;text-shadow:0.3px 0 0 #15181f">125.6</div>
<div class="a" style="right:543.70px;top:476.30px;font-size:7.3px;color:#15181f;font-weight:normal;letter-spacing:-0.05px;text-shadow:0.3px 0 0 #15181f">62.9</div>
<div class="a" style="right:475.20px;top:476.30px;font-size:7.3px;color:#15181f;font-weight:normal;letter-spacing:-0.05px;text-shadow:0.3px 0 0 #15181f">57.3</div>
<div class="a" style="right:406.20px;top:476.30px;font-size:7.3px;color:#15181f;font-weight:normal;letter-spacing:-0.05px;text-shadow:0.3px 0 0 #15181f">104.4</div>
<div class="a" style="right:337.70px;top:476.30px;font-size:7.3px;color:#15181f;font-weight:normal;letter-spacing:-0.05px;text-shadow:0.3px 0 0 #15181f">144.9</div>
<div class="a" style="right:269.20px;top:476.30px;font-size:7.3px;color:#15181f;font-weight:normal;letter-spacing:-0.05px;text-shadow:0.3px 0 0 #15181f">155.3</div>
<div class="a" style="right:228.70px;top:476.30px;font-size:7.3px;color:#15181f;font-weight:normal;letter-spacing:-0.05px;text-shadow:0.3px 0 0 #15181f">0.0</div>
<div class="a" style="right:175.20px;top:476.30px;font-size:7.3px;color:#15181f;font-weight:normal;letter-spacing:-0.05px;text-shadow:0.3px 0 0 #15181f">1.2</div>
<div class="a" style="right:120.40px;top:476.30px;font-size:7.3px;color:#15181f;font-weight:normal;letter-spacing:-0.05px;text-shadow:0.3px 0 0 #15181f">0.0</div>
<div class="a" style="right:66.00px;top:476.30px;font-size:7.3px;color:#15181f;font-weight:normal;letter-spacing:-0.05px;text-shadow:0.3px 0 0 #15181f">0.0</div>
<div class="a" style="right:11.20px;top:476.30px;font-size:7.3px;color:#15181f;font-weight:normal;letter-spacing:-0.05px;text-shadow:0.3px 0 0 #15181f">0.0</div>
<div class="a" style="left:148.50px;top:490.06px;font-size:7.5px;color:#15181f;font-weight:normal;letter-spacing:-0.05px;text-shadow:0.3px 0 0 #15181f">07 - Sales</div>
<div class="a" style="right:680.70px;top:490.23px;font-size:7.3px;color:#15181f;font-weight:normal;letter-spacing:-0.05px;text-shadow:0.3px 0 0 #15181f">129.6</div>
<div class="a" style="right:612.20px;top:490.23px;font-size:7.3px;color:#15181f;font-weight:normal;letter-spacing:-0.05px;text-shadow:0.3px 0 0 #15181f">121.5</div>
<div class="a" style="right:543.70px;top:490.23px;font-size:7.3px;color:#15181f;font-weight:normal;letter-spacing:-0.05px;text-shadow:0.3px 0 0 #15181f">113.8</div>
<div class="a" style="right:475.20px;top:490.23px;font-size:7.3px;color:#15181f;font-weight:normal;letter-spacing:-0.05px;text-shadow:0.3px 0 0 #15181f">71.2</div>
<div class="a" style="right:406.20px;top:490.23px;font-size:7.3px;color:#15181f;font-weight:normal;letter-spacing:-0.05px;text-shadow:0.3px 0 0 #15181f">95.2</div>
<div class="a" style="right:337.70px;top:490.23px;font-size:7.3px;color:#15181f;font-weight:normal;letter-spacing:-0.05px;text-shadow:0.3px 0 0 #15181f">125.6</div>
<div class="a" style="right:269.20px;top:490.23px;font-size:7.3px;color:#15181f;font-weight:normal;letter-spacing:-0.05px;text-shadow:0.3px 0 0 #15181f">141.2</div>
<div class="a" style="right:228.70px;top:490.23px;font-size:7.3px;color:#15181f;font-weight:normal;letter-spacing:-0.05px;text-shadow:0.3px 0 0 #15181f">0.0</div>
<div class="a" style="right:175.20px;top:490.23px;font-size:7.3px;color:#15181f;font-weight:normal;letter-spacing:-0.05px;text-shadow:0.3px 0 0 #15181f">22.8</div>
<div class="a" style="right:120.40px;top:490.23px;font-size:7.3px;color:#15181f;font-weight:normal;letter-spacing:-0.05px;text-shadow:0.3px 0 0 #15181f">30.7</div>
<div class="a" style="right:66.00px;top:490.23px;font-size:7.3px;color:#15181f;font-weight:normal;letter-spacing:-0.05px;text-shadow:0.3px 0 0 #15181f">25.3</div>
<div class="a" style="right:11.20px;top:490.23px;font-size:7.3px;color:#15181f;font-weight:normal;letter-spacing:-0.05px;text-shadow:0.3px 0 0 #15181f">17.5</div>
<div class="a" style="left:148.50px;top:503.99px;font-size:7.5px;color:#15181f;font-weight:normal;letter-spacing:-0.05px;text-shadow:0.3px 0 0 #15181f">FUEL TOTAL</div>
<div class="a" style="right:680.70px;top:504.16px;font-size:7.3px;color:#15181f;font-weight:normal;letter-spacing:-0.05px;text-shadow:0.3px 0 0 #15181f">1,195.6</div>
<div class="a" style="right:612.20px;top:504.16px;font-size:7.3px;color:#15181f;font-weight:normal;letter-spacing:-0.05px;text-shadow:0.3px 0 0 #15181f">764.8</div>
<div class="a" style="right:543.70px;top:504.16px;font-size:7.3px;color:#15181f;font-weight:normal;letter-spacing:-0.05px;text-shadow:0.3px 0 0 #15181f">580.6</div>
<div class="a" style="right:475.20px;top:504.16px;font-size:7.3px;color:#15181f;font-weight:normal;letter-spacing:-0.05px;text-shadow:0.3px 0 0 #15181f">519.9</div>
<div class="a" style="right:406.20px;top:504.16px;font-size:7.3px;color:#15181f;font-weight:normal;letter-spacing:-0.05px;text-shadow:0.3px 0 0 #15181f">632.4</div>
<div class="a" style="right:337.70px;top:504.16px;font-size:7.3px;color:#15181f;font-weight:normal;letter-spacing:-0.05px;text-shadow:0.3px 0 0 #15181f">647.8</div>
<div class="a" style="right:269.20px;top:504.16px;font-size:7.3px;color:#15181f;font-weight:normal;letter-spacing:-0.05px;text-shadow:0.3px 0 0 #15181f">760.8</div>
<div class="a" style="right:228.70px;top:504.16px;font-size:7.3px;color:#15181f;font-weight:normal;letter-spacing:-0.05px;text-shadow:0.3px 0 0 #15181f">0.0</div>
<div class="a" style="right:175.20px;top:504.16px;font-size:7.3px;color:#15181f;font-weight:normal;letter-spacing:-0.05px;text-shadow:0.3px 0 0 #15181f">128.0</div>
<div class="a" style="right:120.40px;top:504.16px;font-size:7.3px;color:#15181f;font-weight:normal;letter-spacing:-0.05px;text-shadow:0.3px 0 0 #15181f">84.5</div>
<div class="a" style="right:66.00px;top:504.16px;font-size:7.3px;color:#15181f;font-weight:normal;letter-spacing:-0.05px;text-shadow:0.3px 0 0 #15181f">158.2</div>
<div class="a" style="right:11.20px;top:504.16px;font-size:7.3px;color:#15181f;font-weight:normal;letter-spacing:-0.05px;text-shadow:0.3px 0 0 #15181f">97.3</div>
<div class="a" style="left:148.50px;top:517.92px;font-size:7.5px;color:#15181f;font-weight:normal;letter-spacing:-0.05px;text-shadow:0.3px 0 0 #15181f">TREATMENTS</div>
<svg class="a" style="left:0;top:0;mix-blend-mode:difference" width="1024" height="560">
<g stroke="#d2d2d2" stroke-width="1" stroke-dasharray="1.4 1.8" fill="none">
<path d="M126.5 97.5 H898.5 M898.5 97.5 V175"/>
<path d="M126.5 97.5 V300.5 H146"/>
<path d="M126.5 305.5 H146 M126.5 305.5 V446.5 H146"/>
</g></svg>
<div class="a" style="left:145.9px;top:173.9px;width:855.1px;height:298.9px;background:#fff;border:1.4px solid #2e2e2e;border-top:1.9px solid #5a5a5a;border-radius:1.5px"></div>
<svg class="a" style="left:0;top:0" width="1024" height="560">
<g fill="#14203c">
<!-- S -->
<path d="M165.8 228.4 V226.3 Q165.8 222.8 169.5 222.8 H191.8 Q190.6 228.4 185.5 228.4 Z"/>
<path d="M166 233.1 H184.5 Q190.5 233.1 190.5 239 V243 Q190.5 248.6 184.8 248.6 H163.4 Q165.2 243.1 170 243.1 H184.4 V238.7 H169.8 Q166 238.7 166 235.6 Z"/>
<!-- C -->
<path d="M200.5 222.8 H217.6 L215.8 228.4 H201.5 Q199.5 228.4 199.5 230.5 V241.5 Q199.5 243.3 201.5 243.3 H215.2 V249 H200 Q193.7 249 193.7 243 V229 Q193.7 222.8 200.5 222.8 Z"/>
<!-- A -->
<path d="M222.8 222.8 H240.5 Q247 222.8 247 229.5 V250.5 Q241 249 241 244 V230.5 Q241 228.4 239 228.4 H221 Z"/>
<path d="M222.8 233.1 H238.2 L236.4 238.9 H227 V249 H221 V235 Q221 233.1 222.8 233.1 Z"/>
<!-- L -->
<path d="M254.8 222.8 H258.7 V243.3 H271.4 V249 H258.5 Q252.8 249 252.8 243 V225 Z"/>
<!-- E -->
<path d="M281 222.8 H298.2 L296.4 228.4 H282 Q281 228.4 281 230 V233.1 H291.4 L289.6 238.9 H281 V241.5 Q281 243.3 283 243.3 H295.8 V249 H281 Q274.8 249 274.8 243 V229 Q274.8 222.8 281 222.8 Z"/>
<!-- bar -->
<rect x="305" y="222.8" width="34.4" height="5.6"/>
</g>
<g fill="#e07a45">
<path d="M306.5 231.6 H316.2 Q320.4 231.6 320.4 235.8 V249.6 Q316.9 249 316.9 246.5 V237.2 Q316.9 235.6 315.3 235.6 H303.2 Q303.2 231.6 306.5 231.6 Z"/>
<path d="M303.2 238.3 H312.2 Q313.9 238.3 313.9 240.1 Q313.9 242 312.2 242 H307 V248.8 H303.2 Z"/>
<path d="M329.4 231.6 H337 Q342 231.6 342 236.6 V243.5 Q342 248.5 337 248.5 H336.2 L338.5 250 Q339.2 251.4 337.6 251.4 H335.6 L331.6 248.5 H329.4 Q324.4 248.5 324.4 243.5 V236.6 Q324.4 231.6 329.4 231.6 Z M329.8 235.4 Q327.9 235.4 327.9 237.3 V243.1 Q327.9 245 329.8 245 H336.4 Q338.3 245 338.3 243.1 V237.3 Q338.3 235.4 336.4 235.4 Z" fill-rule="evenodd"/>
</g>
</svg>
<div class="a" style="left:367.20px;width:400px;text-align:center;top:213.32px;font-size:19.0px;color:#111;font-weight:bold;letter-spacing:0px;transform:scaleX(1.085);text-shadow:0.35px 0 0 #111">Cost development</div>
<div class="a" style="left:367.20px;width:400px;text-align:center;top:245.09px;font-size:18.8px;color:#222;font-weight:normal;letter-spacing:0.35px;">Actuals</div>
<div class="a" style="left:822.50px;top:186.21px;font-size:7.9px;color:#1e1e1e;font-weight:bold;letter-spacing:0.35px;text-shadow:0.2px 0 0 #1e1e1e">Regions</div>
<div class="a" style="right:36.00px;top:186.43px;font-size:8.0px;color:#444;font-weight:normal;letter-spacing:0.3px;text-shadow:0.15px 0 0 #444">All</div>
<div class="a" style="left:820.5px;top:196.8px;width:169.5px;height:1.0px;background:#eef0ea;"></div>
<div class="a" style="left:822.50px;top:199.61px;font-size:7.9px;color:#1e1e1e;font-weight:bold;letter-spacing:0.35px;text-shadow:0.2px 0 0 #1e1e1e">Species</div>
<div class="a" style="right:36.00px;top:199.83px;font-size:8.0px;color:#444;font-weight:normal;letter-spacing:0.3px;text-shadow:0.15px 0 0 #444">All</div>
<div class="a" style="left:820.5px;top:210.20000000000002px;width:169.5px;height:1.0px;background:#eef0ea;"></div>
<div class="a" style="left:822.50px;top:213.01px;font-size:7.9px;color:#1e1e1e;font-weight:bold;letter-spacing:0.35px;text-shadow:0.2px 0 0 #1e1e1e">Generations</div>
<div class="a" style="right:36.00px;top:213.23px;font-size:8.0px;color:#444;font-weight:normal;letter-spacing:0.3px;text-shadow:0.15px 0 0 #444">2022, 2023</div>
<div class="a" style="left:820.5px;top:223.60000000000002px;width:169.5px;height:1.0px;background:#eef0ea;"></div>
<div class="a" style="left:822.50px;top:226.41px;font-size:7.9px;color:#1e1e1e;font-weight:bold;letter-spacing:0.35px;text-shadow:0.2px 0 0 #1e1e1e">Year classes</div>
<div class="a" style="right:36.00px;top:226.63px;font-size:8.0px;color:#444;font-weight:normal;letter-spacing:0.3px;text-shadow:0.15px 0 0 #444">All</div>
<div class="a" style="left:820.5px;top:237.00000000000003px;width:169.5px;height:1.0px;background:#eef0ea;"></div>
<div class="a" style="left:822.50px;top:239.81px;font-size:7.9px;color:#1e1e1e;font-weight:bold;letter-spacing:0.35px;text-shadow:0.2px 0 0 #1e1e1e">Project status</div>
<div class="a" style="right:36.00px;top:240.03px;font-size:8.0px;color:#444;font-weight:normal;letter-spacing:0.3px;text-shadow:0.15px 0 0 #444">All</div>
<div class="a" style="left:820.5px;top:250.4px;width:169.5px;height:1.0px;background:#eef0ea;"></div>
<div class="a" style="left:822.50px;top:253.21px;font-size:7.9px;color:#1e1e1e;font-weight:bold;letter-spacing:0.35px;text-shadow:0.2px 0 0 #1e1e1e">Projects</div>
<div class="a" style="right:36.00px;top:253.43px;font-size:8.0px;color:#444;font-weight:normal;letter-spacing:0.3px;text-shadow:0.15px 0 0 #444">All</div>
<div class="a" style="left:820.5px;top:263.79999999999995px;width:169.5px;height:1.0px;background:#eef0ea;"></div>
<div class="a" style="left:822.50px;top:266.61px;font-size:7.9px;color:#1e1e1e;font-weight:bold;letter-spacing:0.35px;text-shadow:0.2px 0 0 #1e1e1e">Weight type</div>
<div class="a" style="right:36.00px;top:266.83px;font-size:8.0px;color:#444;font-weight:normal;letter-spacing:0.3px;text-shadow:0.15px 0 0 #444">Live weight</div>
<div class="a" style="left:820.5px;top:277.2px;width:169.5px;height:1.0px;background:#eef0ea;"></div>
<div class="a" style="left:822.50px;top:280.01px;font-size:7.9px;color:#1e1e1e;font-weight:bold;letter-spacing:0.35px;text-shadow:0.2px 0 0 #1e1e1e">Cost per</div>
<div class="a" style="right:36.00px;top:280.23px;font-size:8.0px;color:#444;font-weight:normal;letter-spacing:0.3px;text-shadow:0.15px 0 0 #444">Kilo</div>
<svg class="a" style="left:0;top:0" width="1024" height="560"><path d="M165.5 309 H985.8 V431" fill="none" stroke="#e6e6e6" stroke-width="1"/><path d="M166 398.3 H985.8" stroke="#e4e4e4" stroke-width="1"/><path d="M166 365.6 H985.8" stroke="#e4e4e4" stroke-width="1"/><path d="M166 332.9 H985.8" stroke="#e4e4e4" stroke-width="1"/><path d="M296.5 390.0 L299.7 395.59999999999997 L293.3 395.59999999999997 Z" fill="#d8a63c" fill-opacity="0.92"/><path d="M300.2 391.76000000000005 L304.03999999999996 395.6 L300.2 399.44 L296.36 395.6 Z" fill="#f3dd97" fill-opacity="0.92"/><circle cx="303.9" cy="395.9" r="3.2" fill="#bcdcb6" fill-opacity="0.92"/><circle cx="308.7" cy="394.2" r="3.2" fill="#bcdcb6" fill-opacity="0.92"/><circle cx="313.4" cy="398.4" r="3.2" fill="#f3dd97" fill-opacity="0.92"/><circle cx="318.8" cy="397.7" r="3.2" fill="#f3dd97" fill-opacity="0.92"/><rect x="320.90000000000003" y="392.2" width="6.4" height="6.4" fill="#d8a63c" fill-opacity="0.92"/><polygon points="326.10,394.98 328.08,393.00 329.30,394.28 330.52,393.00 332.50,394.98 331.22,396.20 332.50,397.42 330.52,399.40 329.30,398.12 328.08,399.40 326.10,397.42 327.38,396.20" fill="#b8444a" stroke="#b8444a" stroke-width="0.6" stroke-linejoin="round" fill-opacity="0.92"/><polygon points="337.17,400.40 334.40,402.00 331.63,400.40 331.63,397.20 334.40,395.60 337.17,397.20" fill="#b8444a" fill-opacity="0.92"/><rect x="335.0" y="395.8" width="6.4" height="6.4" fill="#db8b5b" fill-opacity="0.92"/><polygon points="344.77,401.60 342.00,403.20 339.23,401.60 339.23,398.40 342.00,396.80 344.77,398.40" fill="#d8a63c" fill-opacity="0.92"/><polygon points="350.07,400.80 347.30,402.40 344.53,400.80 344.53,397.60 347.30,396.00 350.07,397.60" fill="#6aab6a" fill-opacity="0.92"/><polygon points="350.00,398.08 351.98,396.10 353.20,397.38 354.42,396.10 356.40,398.08 355.12,399.30 356.40,400.52 354.42,402.50 353.20,401.22 351.98,402.50 350.00,400.52 351.28,399.30" fill="#db8b5b" stroke="#db8b5b" stroke-width="0.6" stroke-linejoin="round" fill-opacity="0.92"/><path d="M357.6 398.0 L360.8 403.59999999999997 L354.40000000000003 403.59999999999997 Z" fill="#f3dd97" fill-opacity="0.92"/><polygon points="358.10,397.68 360.08,395.70 361.30,396.98 362.52,395.70 364.50,397.68 363.22,398.90 364.50,400.12 362.52,402.10 361.30,400.82 360.08,402.10 358.10,400.12 359.38,398.90" fill="#db8b5b" stroke="#db8b5b" stroke-width="0.6" stroke-linejoin="round" fill-opacity="0.92"/><circle cx="367.0" cy="399.1" r="3.2" fill="#bcdcb6" fill-opacity="0.92"/><path d="M372.0 394.86 L375.84 398.7 L372.0 402.53999999999996 L368.16 398.7 Z" fill="#b8444a" fill-opacity="0.92"/><path d="M378.3 397.0 L381.5 402.59999999999997 L375.1 402.59999999999997 Z" fill="#bcdcb6" fill-opacity="0.92"/><path d="M384.1 397.36 L387.94 401.2 L384.1 405.03999999999996 L380.26000000000005 401.2 Z" fill="#db8b5b" fill-opacity="0.92"/><polygon points="392.47,403.10 389.70,404.70 386.93,403.10 386.93,399.90 389.70,398.30 392.47,399.90" fill="#b8444a" fill-opacity="0.92"/><path d="M393.4 395.26000000000005 L397.23999999999995 399.1 L393.4 402.94 L389.56 399.1 Z" fill="#b8444a" fill-opacity="0.92"/><path d="M399.0 395.90000000000003 L402.2 401.5 L395.8 401.5 Z" fill="#5b9bc4" fill-opacity="0.92"/><polygon points="401.30,402.68 403.28,400.70 404.50,401.98 405.72,400.70 407.70,402.68 406.42,403.90 407.70,405.12 405.72,407.10 404.50,405.82 403.28,407.10 401.30,405.12 402.58,403.90" fill="#5b9bc4" stroke="#5b9bc4" stroke-width="0.6" stroke-linejoin="round" fill-opacity="0.92"/><path d="M410.1 399.76000000000005 L413.94 403.6 L410.1 407.44 L406.26000000000005 403.6 Z" fill="#d8a63c" fill-opacity="0.92"/><polygon points="419.17,402.70 416.40,404.30 413.63,402.70 413.63,399.50 416.40,397.90 419.17,399.50" fill="#bcdcb6" fill-opacity="0.92"/><path d="M421.4 402.26000000000005 L425.23999999999995 406.1 L421.4 409.94 L417.56 406.1 Z" fill="#b8444a" fill-opacity="0.92"/><polygon points="422.50,405.78 424.48,403.80 425.70,405.08 426.92,403.80 428.90,405.78 427.62,407.00 428.90,408.22 426.92,410.20 425.70,408.92 424.48,410.20 422.50,408.22 423.78,407.00" fill="#bcdcb6" stroke="#bcdcb6" stroke-width="0.6" stroke-linejoin="round" fill-opacity="0.92"/><path d="M429.7 403.16 L433.53999999999996 407.0 L429.7 410.84 L425.86 407.0 Z" fill="#b8444a" fill-opacity="0.92"/><path d="M435.7 405.46000000000004 L439.53999999999996 409.3 L435.7 413.14 L431.86 409.3 Z" fill="#6aab6a" fill-opacity="0.92"/><path d="M440.50 404.72 H443.70 V406.80 H445.78 V410.00 H443.70 V412.08 H440.50 V410.00 H438.42 V406.80 H440.50 Z" fill="#f3dd97" stroke="#f3dd97" stroke-width="0.5" stroke-linejoin="round" fill-opacity="0.92"/><rect x="442.90000000000003" y="402.7" width="6.4" height="6.4" fill="#f3dd97" fill-opacity="0.92"/><rect x="446.40000000000003" y="406.0" width="6.4" height="6.4" fill="#5b9bc4" fill-opacity="0.92"/><polygon points="456.77,407.30 454.00,408.90 451.23,407.30 451.23,404.10 454.00,402.50 456.77,404.10" fill="#db8b5b" fill-opacity="0.92"/><rect x="456.1" y="403.40000000000003" width="6.4" height="6.4" fill="#bcdcb6" fill-opacity="0.92"/><path d="M465.6 405.1 L468.8 410.7 L462.40000000000003 410.7 Z" fill="#d8a63c" fill-opacity="0.92"/><path d="M470.5 406.2 L473.7 411.79999999999995 L467.3 411.79999999999995 Z" fill="#bcdcb6" fill-opacity="0.92"/><circle cx="475.2" cy="407.0" r="3.2" fill="#b8444a" fill-opacity="0.92"/><circle cx="480.6" cy="405.3" r="3.2" fill="#f3dd97" fill-opacity="0.92"/><polygon points="488.17,407.10 485.40,408.70 482.63,407.10 482.63,403.90 485.40,402.30 488.17,403.90" fill="#d8a63c" fill-opacity="0.92"/><polygon points="491.97,409.40 489.20,411.00 486.43,409.40 486.43,406.20 489.20,404.60 491.97,406.20" fill="#bcdcb6" fill-opacity="0.92"/><circle cx="495.6" cy="408.1" r="3.2" fill="#f3dd97" fill-opacity="0.92"/><path d="M505.3 401.86 L509.14 405.7 L505.3 409.53999999999996 L501.46000000000004 405.7 Z" fill="#db8b5b" fill-opacity="0.92"/><circle cx="510.6" cy="407.4" r="3.2" fill="#b8444a" fill-opacity="0.92"/><polygon points="513.90,406.08 515.88,404.10 517.10,405.38 518.32,404.10 520.30,406.08 519.02,407.30 520.30,408.52 518.32,410.50 517.10,409.22 515.88,410.50 513.90,408.52 515.18,407.30" fill="#5b9bc4" stroke="#5b9bc4" stroke-width="0.6" stroke-linejoin="round" fill-opacity="0.92"/><path d="M520.9 401.66 L524.74 405.5 L520.9 409.34 L517.06 405.5 Z" fill="#5b9bc4" fill-opacity="0.92"/><polygon points="528.57,410.10 525.80,411.70 523.03,410.10 523.03,406.90 525.80,405.30 528.57,406.90" fill="#d8a63c" fill-opacity="0.92"/><path d="M529.9 405.96000000000004 L533.74 409.8 L529.9 413.64 L526.06 409.8 Z" fill="#b8444a" fill-opacity="0.92"/><polygon points="538.27,411.20 535.50,412.80 532.73,411.20 532.73,408.00 535.50,406.40 538.27,408.00" fill="#5b9bc4" fill-opacity="0.92"/><path d="M541.9 406.1 L545.1 411.7 L538.6999999999999 411.7 Z" fill="#5b9bc4" fill-opacity="0.92"/><path d="M547.0 405.66 L550.84 409.5 L547.0 413.34 L543.16 409.5 Z" fill="#f3dd97" fill-opacity="0.92"/><path d="M575.1 405.06 L578.94 408.9 L575.1 412.73999999999995 L571.26 408.9 Z" fill="#f3dd97" fill-opacity="0.92"/><rect x="577.1999999999999" y="405.7" width="6.4" height="6.4" fill="#f3dd97" fill-opacity="0.92"/><rect x="583.1999999999999" y="405.5" width="6.4" height="6.4" fill="#f3dd97" fill-opacity="0.92"/><circle cx="591.4" cy="406.8" r="3.2" fill="#d8a63c" fill-opacity="0.92"/><rect x="594.0999999999999" y="404.2" width="6.4" height="6.4" fill="#f3dd97" fill-opacity="0.92"/><path d="M603.7 404.0 L606.9000000000001 409.59999999999997 L600.5 409.59999999999997 Z" fill="#db8b5b" fill-opacity="0.92"/><rect x="606.9" y="403.6" width="6.4" height="6.4" fill="#bcdcb6" fill-opacity="0.92"/><rect x="611.0" y="402.8" width="6.4" height="6.4" fill="#b8444a" fill-opacity="0.92"/><circle cx="619.6" cy="409.5" r="3.2" fill="#b8444a" fill-opacity="0.92"/><path d="M625.8 403.5 L629.0 409.09999999999997 L622.5999999999999 409.09999999999997 Z" fill="#bcdcb6" fill-opacity="0.92"/><path d="M630.20 401.92 H633.40 V404.00 H635.48 V407.20 H633.40 V409.28 H630.20 V407.20 H628.12 V404.00 H630.20 Z" fill="#f3dd97" stroke="#f3dd97" stroke-width="0.5" stroke-linejoin="round" fill-opacity="0.92"/><path d="M636.8 402.7 L640.0 408.29999999999995 L633.5999999999999 408.29999999999995 Z" fill="#db8b5b" fill-opacity="0.92"/><path d="M640.5 406.5 L643.7 412.09999999999997 L637.3 412.09999999999997 Z" fill="#6aab6a" fill-opacity="0.92"/><circle cx="645.4" cy="408.7" r="3.2" fill="#b8444a" fill-opacity="0.92"/><rect x="646.1999999999999" y="402.40000000000003" width="6.4" height="6.4" fill="#f3dd97" fill-opacity="0.92"/><rect x="652.4" y="405.8" width="6.4" height="6.4" fill="#f3dd97" fill-opacity="0.92"/><path d="M661.6 406.7 L664.8000000000001 412.29999999999995 L658.4 412.29999999999995 Z" fill="#db8b5b" fill-opacity="0.92"/><circle cx="661.0" cy="407.7" r="3.2" fill="#d8a63c" fill-opacity="0.92"/><circle cx="666.9" cy="408.6" r="3.2" fill="#bcdcb6" fill-opacity="0.92"/><rect x="669.4" y="402.5" width="6.4" height="6.4" fill="#f3dd97" fill-opacity="0.92"/><polygon points="678.97,407.70 676.20,409.30 673.43,407.70 673.43,404.50 676.20,402.90 678.97,404.50" fill="#f3dd97" fill-opacity="0.92"/><polygon points="684.77,408.20 682.00,409.80 679.23,408.20 679.23,405.00 682.00,403.40 684.77,405.00" fill="#6aab6a" fill-opacity="0.92"/><path d="M688.0 402.1 L691.2 407.7 L684.8 407.7 Z" fill="#db8b5b" fill-opacity="0.92"/><polygon points="696.97,409.90 694.20,411.50 691.43,409.90 691.43,406.70 694.20,405.10 696.97,406.70" fill="#6aab6a" fill-opacity="0.92"/><rect x="697.0" y="406.2" width="6.4" height="6.4" fill="#bcdcb6" fill-opacity="0.92"/><polygon points="700.90,406.38 702.88,404.40 704.10,405.68 705.32,404.40 707.30,406.38 706.02,407.60 707.30,408.82 705.32,410.80 704.10,409.52 702.88,410.80 700.90,408.82 702.18,407.60" fill="#b8444a" stroke="#b8444a" stroke-width="0.6" stroke-linejoin="round" fill-opacity="0.92"/><rect x="706.1999999999999" y="405.7" width="6.4" height="6.4" fill="#b8444a" fill-opacity="0.92"/><circle cx="713.4" cy="408.1" r="3.2" fill="#bcdcb6" fill-opacity="0.92"/><polygon points="719.87,410.00 717.10,411.60 714.33,410.00 714.33,406.80 717.10,405.20 719.87,406.80" fill="#bcdcb6" fill-opacity="0.92"/><polygon points="724.77,410.50 722.00,412.10 719.23,410.50 719.23,407.30 722.00,405.70 724.77,407.30" fill="#d8a63c" fill-opacity="0.92"/><circle cx="726.3" cy="406.4" r="3.2" fill="#bcdcb6" fill-opacity="0.92"/><circle cx="731.1" cy="405.1" r="3.2" fill="#b8444a" fill-opacity="0.92"/><polygon points="738.37,411.50 735.60,413.10 732.83,411.50 732.83,408.30 735.60,406.70 738.37,408.30" fill="#bcdcb6" fill-opacity="0.92"/><polygon points="742.47,408.00 739.70,409.60 736.93,408.00 736.93,404.80 739.70,403.20 742.47,404.80" fill="#bcdcb6" fill-opacity="0.92"/><rect x="742.4" y="404.3" width="6.4" height="6.4" fill="#bcdcb6" fill-opacity="0.92"/><path d="M751.7 405.86 L755.5400000000001 409.7 L751.7 413.53999999999996 L747.86 409.7 Z" fill="#bcdcb6" fill-opacity="0.92"/><polygon points="768.00,404.78 769.98,402.80 771.20,404.08 772.42,402.80 774.40,404.78 773.12,406.00 774.40,407.22 772.42,409.20 771.20,407.92 769.98,409.20 768.00,407.22 769.28,406.00" fill="#b8444a" stroke="#b8444a" stroke-width="0.6" stroke-linejoin="round" fill-opacity="0.92"/><path d="M775.9 403.16 L779.74 407.0 L775.9 410.84 L772.06 407.0 Z" fill="#bcdcb6" fill-opacity="0.92"/><rect x="778.1999999999999" y="403.90000000000003" width="6.4" height="6.4" fill="#5b9bc4" fill-opacity="0.92"/><rect x="784.0999999999999" y="406.3" width="6.4" height="6.4" fill="#db8b5b" fill-opacity="0.92"/><path d="M789.60 405.72 H792.80 V407.80 H794.88 V411.00 H792.80 V413.08 H789.60 V411.00 H787.52 V407.80 H789.60 Z" fill="#f3dd97" stroke="#f3dd97" stroke-width="0.5" stroke-linejoin="round" fill-opacity="0.92"/><polygon points="215.13,321.05 212.10,322.80 209.07,321.05 209.07,317.55 212.10,315.80 215.13,317.55" fill="#d8a63c" fill-opacity="0.92"/><circle cx="219.7" cy="327.4" r="3.5" fill="#bcdcb6" fill-opacity="0.92"/><path d="M225.0 320.8 L229.2 325.0 L225.0 329.2 L220.8 325.0 Z" fill="#b8444a" fill-opacity="0.92"/><path d="M229.3 320.8 L233.5 325.0 L229.3 329.2 L225.10000000000002 325.0 Z" fill="#b8444a" fill-opacity="0.92"/><path d="M214.0 332.9 L217.5 339.025 L210.5 339.025 Z" fill="#6aab6a" fill-opacity="0.92"/><path d="M212.25 332.38 H215.75 V334.65 H218.03 V338.15 H215.75 V340.42 H212.25 V338.15 H209.97 V334.65 H212.25 Z" fill="#f3dd97" stroke="#f3dd97" stroke-width="0.5" stroke-linejoin="round" fill-opacity="0.92"/><rect x="221.9" y="338.6" width="7.0" height="7.0" fill="#5b9bc4" fill-opacity="0.92"/><rect x="213.4" y="343.4" width="7.0" height="7.0" fill="#db8b5b" fill-opacity="0.92"/><polygon points="223.60,344.75 224.63,347.18 227.26,347.41 225.26,349.14 225.86,351.71 223.60,350.35 221.34,351.71 221.94,349.14 219.94,347.41 222.57,347.18" fill="#5b9bc4" fill-opacity="0.92"/><circle cx="222.0" cy="351.7" r="3.5" fill="#d8a63c" fill-opacity="0.92"/><polygon points="213.90,353.27 216.07,351.10 217.40,352.50 218.73,351.10 220.90,353.27 219.50,354.60 220.90,355.93 218.73,358.10 217.40,356.70 216.07,358.10 213.90,355.93 215.30,354.60" fill="#e6bfa6" stroke="#e6bfa6" stroke-width="0.6" stroke-linejoin="round" fill-opacity="0.92"/><path d="M219.25 352.98 H222.75 V355.25 H225.03 V358.75 H222.75 V361.02 H219.25 V358.75 H216.97 V355.25 H219.25 Z" fill="#f3dd97" stroke="#f3dd97" stroke-width="0.5" stroke-linejoin="round" fill-opacity="0.92"/><path d="M226.4 352.9 L229.9 359.025 L222.9 359.025 Z" fill="#6aab6a" fill-opacity="0.92"/><path d="M213.6 367.1 L217.1 360.975 L210.1 360.975 Z" fill="#c9a13b" fill-opacity="0.92"/><path d="M220.7 367.5 L224.2 361.375 L217.2 361.375 Z" fill="#e5aab6" fill-opacity="0.92"/><polygon points="228.50,358.97 230.67,356.80 232.00,358.20 233.33,356.80 235.50,358.97 234.10,360.30 235.50,361.63 233.33,363.80 232.00,362.40 230.67,363.80 228.50,361.63 229.90,360.30" fill="#b8444a" stroke="#b8444a" stroke-width="0.6" stroke-linejoin="round" fill-opacity="0.92"/><path d="M240.6 360.3 L244.79999999999998 364.5 L240.6 368.7 L236.4 364.5 Z" fill="#b8444a" fill-opacity="0.92"/><circle cx="229.0" cy="366.0" r="3.5" fill="#6aab6a" fill-opacity="0.92"/><circle cx="232.1" cy="365.4" r="3.5" fill="#bcdcb6" fill-opacity="0.92"/><circle cx="246.9" cy="368.5" r="3.5" fill="#d6703a" fill-opacity="0.92"/><polygon points="225.10,371.17 227.27,369.00 228.60,370.40 229.93,369.00 232.10,371.17 230.70,372.50 232.10,373.83 229.93,376.00 228.60,374.60 227.27,376.00 225.10,373.83 226.50,372.50" fill="#e6bfa6" stroke="#e6bfa6" stroke-width="0.6" stroke-linejoin="round" fill-opacity="0.92"/><path d="M232.15 368.48 H235.65 V370.75 H237.93 V374.25 H235.65 V376.52 H232.15 V374.25 H229.88 V370.75 H232.15 Z" fill="#f3dd97" stroke="#f3dd97" stroke-width="0.5" stroke-linejoin="round" fill-opacity="0.92"/><circle cx="236.0" cy="369.0" r="3.5" fill="#d8a63c" fill-opacity="0.92"/><polygon points="236.20,371.17 238.37,369.00 239.70,370.40 241.03,369.00 243.20,371.17 241.80,372.50 243.20,373.83 241.03,376.00 239.70,374.60 238.37,376.00 236.20,373.83 237.60,372.50" fill="#b8444a" stroke="#b8444a" stroke-width="0.6" stroke-linejoin="round" fill-opacity="0.92"/><polygon points="241.00,370.85 242.03,373.28 244.66,373.51 242.66,375.24 243.26,377.81 241.00,376.45 238.74,377.81 239.34,375.24 237.34,373.51 239.97,373.28" fill="#5b9bc4" fill-opacity="0.92"/><path d="M246.0 376.9 L249.5 370.775 L242.5 370.775 Z" fill="#b8444a" fill-opacity="0.92"/><circle cx="257.6" cy="373.6" r="3.5" fill="#d6703a" fill-opacity="0.92"/><polygon points="252.90,341.77 255.07,339.60 256.40,341.00 257.73,339.60 259.90,341.77 258.50,343.10 259.90,344.43 257.73,346.60 256.40,345.20 255.07,346.60 252.90,344.43 254.30,343.10" fill="#e6bfa6" stroke="#e6bfa6" stroke-width="0.6" stroke-linejoin="round" fill-opacity="0.92"/><path d="M228.1 387.6 L231.6 381.475 L224.6 381.475 Z" fill="#c9a13b" fill-opacity="0.92"/><rect x="235.5" y="376.5" width="7.0" height="7.0" fill="#db8b5b" fill-opacity="0.92"/><polygon points="235.80,379.67 237.97,377.50 239.30,378.90 240.63,377.50 242.80,379.67 241.40,381.00 242.80,382.33 240.63,384.50 239.30,383.10 237.97,384.50 235.80,382.33 237.20,381.00" fill="#e6bfa6" stroke="#e6bfa6" stroke-width="0.6" stroke-linejoin="round" fill-opacity="0.92"/><polygon points="242.00,380.07 244.17,377.90 245.50,379.30 246.83,377.90 249.00,380.07 247.60,381.40 249.00,382.73 246.83,384.90 245.50,383.50 244.17,384.90 242.00,382.73 243.40,381.40" fill="#e6bfa6" stroke="#e6bfa6" stroke-width="0.6" stroke-linejoin="round" fill-opacity="0.92"/><path d="M242.0 390.3 L245.5 384.175 L238.5 384.175 Z" fill="#c9a13b" fill-opacity="0.92"/><circle cx="250.9" cy="381.0" r="3.5" fill="#bcdcb6" fill-opacity="0.92"/><polygon points="252.80,380.07 254.97,377.90 256.30,379.30 257.63,377.90 259.80,380.07 258.40,381.40 259.80,382.73 257.63,384.90 256.30,383.50 254.97,384.90 252.80,382.73 254.20,381.40" fill="#b8444a" stroke="#b8444a" stroke-width="0.6" stroke-linejoin="round" fill-opacity="0.92"/><path d="M260.7 375.8 L264.9 380.0 L260.7 384.2 L256.5 380.0 Z" fill="#b8444a" fill-opacity="0.92"/><polygon points="270.50,376.65 271.53,379.08 274.16,379.31 272.16,381.04 272.76,383.61 270.50,382.25 268.24,383.61 268.84,381.04 266.84,379.31 269.47,379.08" fill="#5b9bc4" fill-opacity="0.92"/><circle cx="274.6" cy="381.0" r="3.5" fill="#d6703a" fill-opacity="0.92"/><polygon points="280.90,369.87 283.07,367.70 284.40,369.10 285.73,367.70 287.90,369.87 286.50,371.20 287.90,372.53 285.73,374.70 284.40,373.30 283.07,374.70 280.90,372.53 282.30,371.20" fill="#e6bfa6" stroke="#e6bfa6" stroke-width="0.6" stroke-linejoin="round" fill-opacity="0.92"/><path d="M287.5 376.5 L291.0 382.625 L284.0 382.625 Z" fill="#b5d5e5" fill-opacity="0.92"/><rect x="251.4" y="384.2" width="7.0" height="7.0" fill="#db8b5b" fill-opacity="0.92"/><path d="M258.05 382.28 H261.55 V384.55 H263.82 V388.05 H261.55 V390.32 H258.05 V388.05 H255.78 V384.55 H258.05 Z" fill="#f3dd97" stroke="#f3dd97" stroke-width="0.5" stroke-linejoin="round" fill-opacity="0.92"/><circle cx="265.2" cy="389.0" r="3.5" fill="#d8a63c" fill-opacity="0.92"/><path d="M259.4 396.1 L262.9 389.975 L255.89999999999998 389.975 Z" fill="#e5aab6" fill-opacity="0.92"/><path d="M265.0 395.5 L268.5 389.375 L261.5 389.375 Z" fill="#c9a13b" fill-opacity="0.92"/><circle cx="271.4" cy="385.4" r="3.5" fill="#bcdcb6" fill-opacity="0.92"/><path d="M269.65 385.48 H273.15 V387.75 H275.42 V391.25 H273.15 V393.52 H269.65 V391.25 H267.38 V387.75 H269.65 Z" fill="#f3dd97" stroke="#f3dd97" stroke-width="0.5" stroke-linejoin="round" fill-opacity="0.92"/><rect x="270.6" y="390.5" width="7.0" height="7.0" fill="#db8b5b" fill-opacity="0.92"/><path d="M277.7 386.6 L281.9 390.8 L277.7 395.0 L273.5 390.8 Z" fill="#b8444a" fill-opacity="0.92"/><path d="M281.25 385.88 H284.75 V388.15 H287.02 V391.65 H284.75 V393.92 H281.25 V391.65 H278.98 V388.15 H281.25 Z" fill="#f3dd97" stroke="#f3dd97" stroke-width="0.5" stroke-linejoin="round" fill-opacity="0.92"/><rect x="280.5" y="390.9" width="7.0" height="7.0" fill="#db8b5b" fill-opacity="0.92"/><path d="M284.8 401.9 L288.3 395.775 L281.3 395.775 Z" fill="#e5aab6" fill-opacity="0.92"/><circle cx="290.6" cy="390.4" r="3.5" fill="#bcdcb6" fill-opacity="0.92"/><path d="M295.5 391.1 L299.7 395.3 L295.5 399.5 L291.3 395.3 Z" fill="#b8444a" fill-opacity="0.92"/><path d="M296.45 385.48 H299.95 V387.75 H302.22 V391.25 H299.95 V393.52 H296.45 V391.25 H294.18 V387.75 H296.45 Z" fill="#f3dd97" stroke="#f3dd97" stroke-width="0.5" stroke-linejoin="round" fill-opacity="0.92"/><circle cx="303.6" cy="397.5" r="3.5" fill="#6aab6a" fill-opacity="0.92"/><polygon points="302.20,370.77 304.37,368.60 305.70,370.00 307.03,368.60 309.20,370.77 307.80,372.10 309.20,373.43 307.03,375.60 305.70,374.20 304.37,375.60 302.20,373.43 303.60,372.10" fill="#e6bfa6" stroke="#e6bfa6" stroke-width="0.6" stroke-linejoin="round" fill-opacity="0.92"/><polygon points="327.50,377.37 329.67,375.20 331.00,376.60 332.33,375.20 334.50,377.37 333.10,378.70 334.50,380.03 332.33,382.20 331.00,380.80 329.67,382.20 327.50,380.03 328.90,378.70" fill="#e6bfa6" stroke="#e6bfa6" stroke-width="0.6" stroke-linejoin="round" fill-opacity="0.92"/><polygon points="351.90,381.47 354.07,379.30 355.40,380.70 356.73,379.30 358.90,381.47 357.50,382.80 358.90,384.13 356.73,386.30 355.40,384.90 354.07,386.30 351.90,384.13 353.30,382.80" fill="#e6bfa6" stroke="#e6bfa6" stroke-width="0.6" stroke-linejoin="round" fill-opacity="0.92"/><polygon points="376.50,385.57 378.67,383.40 380.00,384.80 381.33,383.40 383.50,385.57 382.10,386.90 383.50,388.23 381.33,390.40 380.00,389.00 378.67,390.40 376.50,388.23 377.90,386.90" fill="#e6bfa6" stroke="#e6bfa6" stroke-width="0.6" stroke-linejoin="round" fill-opacity="0.92"/><polygon points="425.30,392.37 427.47,390.20 428.80,391.60 430.13,390.20 432.30,392.37 430.90,393.70 432.30,395.03 430.13,397.20 428.80,395.80 427.47,397.20 425.30,395.03 426.70,393.70" fill="#e6bfa6" stroke="#e6bfa6" stroke-width="0.6" stroke-linejoin="round" fill-opacity="0.92"/><path d="M309.8 382.7 L313.3 388.825 L306.3 388.825 Z" fill="#b5d5e5" fill-opacity="0.92"/><path d="M322.8 382.0 L326.3 388.125 L319.3 388.125 Z" fill="#b5d5e5" fill-opacity="0.92"/><path d="M348.8 386.8 L352.3 392.925 L345.3 392.925 Z" fill="#b5d5e5" fill-opacity="0.92"/><path d="M377.5 390.9 L381.0 397.025 L374.0 397.025 Z" fill="#b5d5e5" fill-opacity="0.92"/><path d="M412.4 393.6 L415.9 399.725 L408.9 399.725 Z" fill="#b5d5e5" fill-opacity="0.92"/><circle cx="291.6" cy="390.3" r="3.5" fill="#bcdcb6" fill-opacity="0.92"/><path d="M296.45 385.28 H299.95 V387.55 H302.22 V391.05 H299.95 V393.32 H296.45 V391.05 H294.18 V387.55 H296.45 Z" fill="#f3dd97" stroke="#f3dd97" stroke-width="0.5" stroke-linejoin="round" fill-opacity="0.92"/><polygon points="301.50,388.97 303.67,386.80 305.00,388.20 306.33,386.80 308.50,388.97 307.10,390.30 308.50,391.63 306.33,393.80 305.00,392.40 303.67,393.80 301.50,391.63 302.90,390.30" fill="#b8444a" stroke="#b8444a" stroke-width="0.6" stroke-linejoin="round" fill-opacity="0.92"/><path d="M295.5 390.8 L299.7 395.0 L295.5 399.2 L291.3 395.0 Z" fill="#b8444a" fill-opacity="0.92"/><circle cx="311.9" cy="393.0" r="3.5" fill="#d8a63c" fill-opacity="0.92"/><path d="M316.0 386.5 L320.2 390.7 L316.0 394.9 L311.8 390.7 Z" fill="#b8444a" fill-opacity="0.92"/><circle cx="316.3" cy="395.4" r="3.5" fill="#bcdcb6" fill-opacity="0.92"/><rect x="298.1" y="390.2" width="7.0" height="7.0" fill="#5b9bc4" fill-opacity="0.92"/><circle cx="303.7" cy="397.5" r="3.5" fill="#6aab6a" fill-opacity="0.92"/><rect x="306.3" y="395.0" width="7.0" height="7.0" fill="#db8b5b" fill-opacity="0.92"/><path d="M317.3 407.5 L320.8 401.375 L313.8 401.375 Z" fill="#e5aab6" fill-opacity="0.92"/><rect x="319.3" y="394.3" width="7.0" height="7.0" fill="#5b9bc4" fill-opacity="0.92"/><polygon points="323.50,396.47 325.67,394.30 327.00,395.70 328.33,394.30 330.50,396.47 329.10,397.80 330.50,399.13 328.33,401.30 327.00,399.90 325.67,401.30 323.50,399.13 324.90,397.80" fill="#b8444a" stroke="#b8444a" stroke-width="0.6" stroke-linejoin="round" fill-opacity="0.92"/><path d="M329.25 390.38 H332.75 V392.65 H335.02 V396.15 H332.75 V398.42 H329.25 V396.15 H326.98 V392.65 H329.25 Z" fill="#f3dd97" stroke="#f3dd97" stroke-width="0.5" stroke-linejoin="round" fill-opacity="0.92"/><circle cx="334.0" cy="397.5" r="3.5" fill="#d8a63c" fill-opacity="0.92"/><path d="M331.7 396.8 L335.2 402.925 L328.2 402.925 Z" fill="#6aab6a" fill-opacity="0.92"/><path d="M338.5 396.3 L342.7 400.5 L338.5 404.7 L334.3 400.5 Z" fill="#b8444a" fill-opacity="0.92"/><path d="M343.3 389.8 L347.5 394.0 L343.3 398.2 L339.1 394.0 Z" fill="#b8444a" fill-opacity="0.92"/><rect x="343.2" y="398.4" width="7.0" height="7.0" fill="#db8b5b" fill-opacity="0.92"/><polygon points="344.50,396.17 346.67,394.00 348.00,395.40 349.33,394.00 351.50,396.17 350.10,397.50 351.50,398.83 349.33,401.00 348.00,399.60 346.67,401.00 344.50,398.83 345.90,397.50" fill="#b8444a" stroke="#b8444a" stroke-width="0.6" stroke-linejoin="round" fill-opacity="0.92"/><polygon points="355.63,402.55 352.60,404.30 349.57,402.55 349.57,399.05 352.60,397.30 355.63,399.05" fill="#6aab6a" fill-opacity="0.92"/><circle cx="359.0" cy="400.8" r="3.5" fill="#bcdcb6" fill-opacity="0.92"/><path d="M360.05 393.48 H363.55 V395.75 H365.82 V399.25 H363.55 V401.52 H360.05 V399.25 H357.78 V395.75 H360.05 Z" fill="#f3dd97" stroke="#f3dd97" stroke-width="0.5" stroke-linejoin="round" fill-opacity="0.92"/><rect x="355.5" y="399.8" width="7.0" height="7.0" fill="#5b9bc4" fill-opacity="0.92"/><rect x="362.8" y="399.1" width="7.0" height="7.0" fill="#db8b5b" fill-opacity="0.92"/><path d="M363.8 398.40000000000003 L368.0 402.6 L363.8 406.8 L359.6 402.6 Z" fill="#b8444a" fill-opacity="0.92"/><path d="M370.7 403.9 L374.2 410.025 L367.2 410.025 Z" fill="#6aab6a" fill-opacity="0.92"/><path d="M367.2 416.4 L370.7 410.275 L363.7 410.275 Z" fill="#e5aab6" fill-opacity="0.92"/><path d="M381.6 394.3 L385.8 398.5 L381.6 402.7 L377.40000000000003 398.5 Z" fill="#b8444a" fill-opacity="0.92"/><polygon points="385.33,403.65 382.30,405.40 379.27,403.65 379.27,400.15 382.30,398.40 385.33,400.15" fill="#d8a63c" fill-opacity="0.92"/><polygon points="386.30,401.97 388.47,399.80 389.80,401.20 391.13,399.80 393.30,401.97 391.90,403.30 393.30,404.63 391.13,406.80 389.80,405.40 388.47,406.80 386.30,404.63 387.70,403.30" fill="#b8444a" stroke="#b8444a" stroke-width="0.6" stroke-linejoin="round" fill-opacity="0.92"/><path d="M387.3 415.7 L390.8 409.575 L383.8 409.575 Z" fill="#e5aab6" fill-opacity="0.92"/><path d="M394.65 396.78 H398.15 V399.05 H400.42 V402.55 H398.15 V404.82 H394.65 V402.55 H392.38 V399.05 H394.65 Z" fill="#f3dd97" stroke="#f3dd97" stroke-width="0.5" stroke-linejoin="round" fill-opacity="0.92"/><rect x="398.6" y="402.5" width="7.0" height="7.0" fill="#5b9bc4" fill-opacity="0.92"/><circle cx="402.1" cy="403.3" r="3.5" fill="#bcdcb6" fill-opacity="0.92"/><rect x="404.1" y="401.8" width="7.0" height="7.0" fill="#db8b5b" fill-opacity="0.92"/><polygon points="413.70,400.75 414.73,403.18 417.36,403.41 415.36,405.14 415.96,407.71 413.70,406.35 411.44,407.71 412.04,405.14 410.04,403.41 412.67,403.18" fill="#e5aab6" fill-opacity="0.92"/><polygon points="413.00,402.67 415.17,400.50 416.50,401.90 417.83,400.50 420.00,402.67 418.60,404.00 420.00,405.33 417.83,407.50 416.50,406.10 415.17,407.50 413.00,405.33 414.40,404.00" fill="#b8444a" stroke="#b8444a" stroke-width="0.6" stroke-linejoin="round" fill-opacity="0.92"/><polygon points="424.33,406.35 421.30,408.10 418.27,406.35 418.27,402.85 421.30,401.10 424.33,402.85" fill="#6aab6a" fill-opacity="0.92"/><path d="M426.0 401.8 L430.2 406.0 L426.0 410.2 L421.8 406.0 Z" fill="#b8444a" fill-opacity="0.92"/><path d="M415.0 415.0 L418.5 408.875 L411.5 408.875 Z" fill="#e5aab6" fill-opacity="0.92"/><path d="M425.65 396.78 H429.15 V399.05 H431.42 V402.55 H429.15 V404.82 H425.65 V402.55 H423.38 V399.05 H425.65 Z" fill="#f3dd97" stroke="#f3dd97" stroke-width="0.5" stroke-linejoin="round" fill-opacity="0.92"/><path d="M413.7 405.9 L417.2 412.025 L410.2 412.025 Z" fill="#6aab6a" fill-opacity="0.92"/><circle cx="421.0" cy="404.6" r="3.5" fill="#6aab6a" fill-opacity="0.92"/><polygon points="423.50,404.47 425.67,402.30 427.00,403.70 428.33,402.30 430.50,404.47 429.10,405.80 430.50,407.13 428.33,409.30 427.00,407.90 425.67,409.30 423.50,407.13 424.90,405.80" fill="#b8444a" stroke="#b8444a" stroke-width="0.6" stroke-linejoin="round" fill-opacity="0.92"/><path d="M426.45 397.58 H429.95 V399.85 H432.22 V403.35 H429.95 V405.62 H426.45 V403.35 H424.18 V399.85 H426.45 Z" fill="#f3dd97" stroke="#f3dd97" stroke-width="0.5" stroke-linejoin="round" fill-opacity="0.92"/><circle cx="434.5" cy="404.0" r="3.5" fill="#d8a63c" fill-opacity="0.92"/><circle cx="440.6" cy="404.6" r="3.5" fill="#bcdcb6" fill-opacity="0.92"/><rect x="442.3" y="401.1" width="7.0" height="7.0" fill="#b8444a" fill-opacity="0.92"/><rect x="449.3" y="402.7" width="7.0" height="7.0" fill="#db8b5b" fill-opacity="0.92"/><path d="M451.6 415.8 L455.1 409.675 L448.1 409.675 Z" fill="#e5aab6" fill-opacity="0.92"/><path d="M462.7 397.5 L466.2 403.625 L459.2 403.625 Z" fill="#b5d5e5" fill-opacity="0.92"/><path d="M461.7 402.8 L465.9 407.0 L461.7 411.2 L457.5 407.0 Z" fill="#b8444a" fill-opacity="0.92"/><path d="M470.0 402.8 L474.2 407.0 L470.0 411.2 L465.8 407.0 Z" fill="#b8444a" fill-opacity="0.92"/><circle cx="471.6" cy="404.0" r="3.5" fill="#bcdcb6" fill-opacity="0.92"/><path d="M475.25 399.98 H478.75 V402.25 H481.02 V405.75 H478.75 V408.02 H475.25 V405.75 H472.98 V402.25 H475.25 Z" fill="#f3dd97" stroke="#f3dd97" stroke-width="0.5" stroke-linejoin="round" fill-opacity="0.92"/><circle cx="482.6" cy="405.3" r="3.5" fill="#d8a63c" fill-opacity="0.92"/><path d="M481.4 415.1 L484.9 408.975 L477.9 408.975 Z" fill="#e5aab6" fill-opacity="0.92"/><polygon points="484.00,396.27 486.17,394.10 487.50,395.50 488.83,394.10 491.00,396.27 489.60,397.60 491.00,398.93 488.83,401.10 487.50,399.70 486.17,401.10 484.00,398.93 485.40,397.60" fill="#e6bfa6" stroke="#e6bfa6" stroke-width="0.6" stroke-linejoin="round" fill-opacity="0.92"/><rect x="491.5" y="405.1" width="7.0" height="7.0" fill="#db8b5b" fill-opacity="0.92"/><path d="M495.0 404.40000000000003 L499.2 408.6 L495.0 412.8 L490.8 408.6 Z" fill="#b8444a" fill-opacity="0.92"/><polygon points="507.83,409.45 504.80,411.20 501.77,409.45 501.77,405.95 504.80,404.20 507.83,405.95" fill="#6aab6a" fill-opacity="0.92"/><rect x="503.7" y="408.1" width="7.0" height="7.0" fill="#5b9bc4" fill-opacity="0.92"/><circle cx="515.6" cy="405.3" r="3.5" fill="#bcdcb6" fill-opacity="0.92"/><path d="M518.4 415.8 L521.9 409.675 L514.9 409.675 Z" fill="#e5aab6" fill-opacity="0.92"/><path d="M524.0 401.1 L527.5 407.225 L520.5 407.225 Z" fill="#b5d5e5" fill-opacity="0.92"/><path d="M526.05 401.78 H529.55 V404.05 H531.82 V407.55 H529.55 V409.82 H526.05 V407.55 H523.77 V404.05 H526.05 Z" fill="#f3dd97" stroke="#f3dd97" stroke-width="0.5" stroke-linejoin="round" fill-opacity="0.92"/><path d="M534.8 405.1 L539.0 409.3 L534.8 413.5 L530.5999999999999 409.3 Z" fill="#b8444a" fill-opacity="0.92"/><rect x="535.5" y="405.8" width="7.0" height="7.0" fill="#db8b5b" fill-opacity="0.92"/><rect x="536.5" y="408.5" width="7.0" height="7.0" fill="#5b9bc4" fill-opacity="0.92"/><polygon points="534.80,398.67 536.97,396.50 538.30,397.90 539.63,396.50 541.80,398.67 540.40,400.00 541.80,401.33 539.63,403.50 538.30,402.10 536.97,403.50 534.80,401.33 536.20,400.00" fill="#e6bfa6" stroke="#e6bfa6" stroke-width="0.6" stroke-linejoin="round" fill-opacity="0.92"/><polygon points="546.03,408.75 543.00,410.50 539.97,408.75 539.97,405.25 543.00,403.50 546.03,405.25" fill="#6aab6a" fill-opacity="0.92"/><polygon points="556.00,405.45 557.03,407.88 559.66,408.11 557.66,409.84 558.26,412.41 556.00,411.05 553.74,412.41 554.34,409.84 552.34,408.11 554.97,407.88" fill="#b8444a" fill-opacity="0.92"/><path d="M562.0 404.40000000000003 L566.2 408.6 L562.0 412.8 L557.8 408.6 Z" fill="#b8444a" fill-opacity="0.92"/><path d="M567.05 402.18 H570.55 V404.45 H572.82 V407.95 H570.55 V410.22 H567.05 V407.95 H564.77 V404.45 H567.05 Z" fill="#f3dd97" stroke="#f3dd97" stroke-width="0.5" stroke-linejoin="round" fill-opacity="0.92"/><circle cx="571.0" cy="407.7" r="3.5" fill="#bcdcb6" fill-opacity="0.92"/><path d="M565.8 415.8 L569.3 409.675 L562.3 409.675 Z" fill="#e5aab6" fill-opacity="0.92"/><polygon points="575.90,399.27 578.07,397.10 579.40,398.50 580.73,397.10 582.90,399.27 581.50,400.60 582.90,401.93 580.73,404.10 579.40,402.70 578.07,404.10 575.90,401.93 577.30,400.60" fill="#e6bfa6" stroke="#e6bfa6" stroke-width="0.6" stroke-linejoin="round" fill-opacity="0.92"/><path d="M578.0 402.3 L581.5 408.425 L574.5 408.425 Z" fill="#b5d5e5" fill-opacity="0.92"/><rect x="578.2" y="405.8" width="7.0" height="7.0" fill="#db8b5b" fill-opacity="0.92"/><path d="M586.9 403.5 L591.1 407.7 L586.9 411.9 L582.6999999999999 407.7 Z" fill="#b8444a" fill-opacity="0.92"/><path d="M592.85 402.18 H596.35 V404.45 H598.62 V407.95 H596.35 V410.22 H592.85 V407.95 H590.58 V404.45 H592.85 Z" fill="#f3dd97" stroke="#f3dd97" stroke-width="0.5" stroke-linejoin="round" fill-opacity="0.92"/><rect x="593.5" y="408.1" width="7.0" height="7.0" fill="#5b9bc4" fill-opacity="0.92"/><circle cx="605.0" cy="407.7" r="3.5" fill="#d8a63c" fill-opacity="0.92"/><path d="M607.5 416.3 L611.0 410.175 L604.0 410.175 Z" fill="#e5aab6" fill-opacity="0.92"/><polygon points="616.33,410.35 613.30,412.10 610.27,410.35 610.27,406.85 613.30,405.10 616.33,406.85" fill="#6aab6a" fill-opacity="0.92"/><circle cx="622.0" cy="407.0" r="3.5" fill="#bcdcb6" fill-opacity="0.92"/><rect x="617.5" y="406.5" width="7.0" height="7.0" fill="#db8b5b" fill-opacity="0.92"/><polygon points="626.90,399.27 629.07,397.10 630.40,398.50 631.73,397.10 633.90,399.27 632.50,400.60 633.90,401.93 631.73,404.10 630.40,402.70 629.07,404.10 626.90,401.93 628.30,400.60" fill="#e6bfa6" stroke="#e6bfa6" stroke-width="0.6" stroke-linejoin="round" fill-opacity="0.92"/><path d="M632.8 405.8 L637.0 410.0 L632.8 414.2 L628.5999999999999 410.0 Z" fill="#b8444a" fill-opacity="0.92"/><path d="M628.0 402.3 L631.5 408.425 L624.5 408.425 Z" fill="#b5d5e5" fill-opacity="0.92"/><path d="M638.55 403.68 H642.05 V405.95 H644.32 V409.45 H642.05 V411.72 H638.55 V409.45 H636.27 V405.95 H638.55 Z" fill="#f3dd97" stroke="#f3dd97" stroke-width="0.5" stroke-linejoin="round" fill-opacity="0.92"/><circle cx="649.2" cy="408.6" r="3.5" fill="#d8a63c" fill-opacity="0.92"/><rect x="646.5" y="409.3" width="7.0" height="7.0" fill="#5b9bc4" fill-opacity="0.92"/><path d="M654.0 404.40000000000003 L658.2 408.6 L654.0 412.8 L649.8 408.6 Z" fill="#b8444a" fill-opacity="0.92"/><circle cx="656.6" cy="409.3" r="3.5" fill="#6aab6a" fill-opacity="0.92"/><path d="M657.0 401.1 L660.5 407.225 L653.5 407.225 Z" fill="#b5d5e5" fill-opacity="0.92"/><path d="M662.9 416.3 L666.4 410.175 L659.4 410.175 Z" fill="#e5aab6" fill-opacity="0.92"/><path d="M664.0 401.1 L667.5 407.225 L660.5 407.225 Z" fill="#b5d5e5" fill-opacity="0.92"/><path d="M665.15 402.18 H668.65 V404.45 H670.92 V407.95 H668.65 V410.22 H665.15 V407.95 H662.88 V404.45 H665.15 Z" fill="#f3dd97" stroke="#f3dd97" stroke-width="0.5" stroke-linejoin="round" fill-opacity="0.92"/><rect x="666.5" y="406.5" width="7.0" height="7.0" fill="#db8b5b" fill-opacity="0.92"/><path d="M678.0 405.1 L682.2 409.3 L678.0 413.5 L673.8 409.3 Z" fill="#b8444a" fill-opacity="0.92"/><path d="M684.7 405.1 L688.9000000000001 409.3 L684.7 413.5 L680.5 409.3 Z" fill="#b8444a" fill-opacity="0.92"/><polygon points="691.00,405.45 692.03,407.88 694.66,408.11 692.66,409.84 693.26,412.41 691.00,411.05 688.74,412.41 689.34,409.84 687.34,408.11 689.97,407.88" fill="#b8444a" fill-opacity="0.92"/><polygon points="689.90,400.27 692.07,398.10 693.40,399.50 694.73,398.10 696.90,400.27 695.50,401.60 696.90,402.93 694.73,405.10 693.40,403.70 692.07,405.10 689.90,402.93 691.30,401.60" fill="#e6bfa6" stroke="#e6bfa6" stroke-width="0.6" stroke-linejoin="round" fill-opacity="0.92"/><circle cx="696.9" cy="408.6" r="3.5" fill="#bcdcb6" fill-opacity="0.92"/><rect x="696.2" y="409.3" width="7.0" height="7.0" fill="#5b9bc4" fill-opacity="0.92"/><circle cx="702.7" cy="408.6" r="3.5" fill="#d8a63c" fill-opacity="0.92"/><path d="M706.0 405.8 L709.5 411.925 L702.5 411.925 Z" fill="#6aab6a" fill-opacity="0.92"/><path d="M709.65 401.78 H713.15 V404.05 H715.42 V407.55 H713.15 V409.82 H709.65 V407.55 H707.38 V404.05 H709.65 Z" fill="#f3dd97" stroke="#f3dd97" stroke-width="0.5" stroke-linejoin="round" fill-opacity="0.92"/><polygon points="718.03,411.75 715.00,413.50 711.97,411.75 711.97,408.25 715.00,406.50 718.03,408.25" fill="#6aab6a" fill-opacity="0.92"/><rect x="719.1" y="405.1" width="7.0" height="7.0" fill="#db8b5b" fill-opacity="0.92"/><path d="M723.8 416.3 L727.3 410.175 L720.3 410.175 Z" fill="#e5aab6" fill-opacity="0.92"/><polygon points="725.70,401.67 727.87,399.50 729.20,400.90 730.53,399.50 732.70,401.67 731.30,403.00 732.70,404.33 730.53,406.50 729.20,405.10 727.87,406.50 725.70,404.33 727.10,403.00" fill="#e6bfa6" stroke="#e6bfa6" stroke-width="0.6" stroke-linejoin="round" fill-opacity="0.92"/><path d="M730.9 405.8 L735.1 410.0 L730.9 414.2 L726.6999999999999 410.0 Z" fill="#b8444a" fill-opacity="0.92"/><circle cx="732.5" cy="407.0" r="3.5" fill="#d8a63c" fill-opacity="0.92"/><polygon points="737.83,411.05 734.80,412.80 731.77,411.05 731.77,407.55 734.80,405.80 737.83,407.55" fill="#6aab6a" fill-opacity="0.92"/><rect x="736.7" y="405.8" width="7.0" height="7.0" fill="#db8b5b" fill-opacity="0.92"/><circle cx="747.3" cy="409.3" r="3.5" fill="#bcdcb6" fill-opacity="0.92"/><rect x="744.9" y="409.3" width="7.0" height="7.0" fill="#5b9bc4" fill-opacity="0.92"/><polygon points="759.50,401.67 761.67,399.50 763.00,400.90 764.33,399.50 766.50,401.67 765.10,403.00 766.50,404.33 764.33,406.50 763.00,405.10 761.67,406.50 759.50,404.33 760.90,403.00" fill="#e6bfa6" stroke="#e6bfa6" stroke-width="0.6" stroke-linejoin="round" fill-opacity="0.92"/><path d="M763.7 405.8 L767.2 411.925 L760.2 411.925 Z" fill="#6aab6a" fill-opacity="0.92"/><path d="M770.7 406.8 L774.9000000000001 411.0 L770.7 415.2 L766.5 411.0 Z" fill="#b8444a" fill-opacity="0.92"/><path d="M772.45 402.18 H775.95 V404.45 H778.23 V407.95 H775.95 V410.22 H772.45 V407.95 H770.18 V404.45 H772.45 Z" fill="#f3dd97" stroke="#f3dd97" stroke-width="0.5" stroke-linejoin="round" fill-opacity="0.92"/><polygon points="774.90,403.97 777.07,401.80 778.40,403.20 779.73,401.80 781.90,403.97 780.50,405.30 781.90,406.63 779.73,408.80 778.40,407.40 777.07,408.80 774.90,406.63 776.30,405.30" fill="#b8444a" stroke="#b8444a" stroke-width="0.6" stroke-linejoin="round" fill-opacity="0.92"/><rect x="778.9" y="405.8" width="7.0" height="7.0" fill="#db8b5b" fill-opacity="0.92"/><path d="M788.3 405.1 L792.5 409.3 L788.3 413.5 L784.0999999999999 409.3 Z" fill="#b8444a" fill-opacity="0.92"/><rect x="788.3" y="409.3" width="7.0" height="7.0" fill="#5b9bc4" fill-opacity="0.92"/><path d="M798.8 417.5 L802.3 411.375 L795.3 411.375 Z" fill="#e5aab6" fill-opacity="0.92"/><circle cx="806.5" cy="408.6" r="3.5" fill="#bcdcb6" fill-opacity="0.92"/><path d="M809.4 406.8 L813.6 411.0 L809.4 415.2 L805.1999999999999 411.0 Z" fill="#b8444a" fill-opacity="0.92"/><polygon points="818.80,401.67 820.97,399.50 822.30,400.90 823.63,399.50 825.80,401.67 824.40,403.00 825.80,404.33 823.63,406.50 822.30,405.10 820.97,406.50 818.80,404.33 820.20,403.00" fill="#e6bfa6" stroke="#e6bfa6" stroke-width="0.6" stroke-linejoin="round" fill-opacity="0.92"/><polygon points="821.80,401.67 823.97,399.50 825.30,400.90 826.63,399.50 828.80,401.67 827.40,403.00 828.80,404.33 826.63,406.50 825.30,405.10 823.97,406.50 821.80,404.33 823.20,403.00" fill="#e6bfa6" stroke="#e6bfa6" stroke-width="0.6" stroke-linejoin="round" fill-opacity="0.92"/><path d="M830.0 412.1 L833.5 405.975 L826.5 405.975 Z" fill="#c9a13b" fill-opacity="0.92"/><path d="M832.3 407.0 L835.8 413.125 L828.8 413.125 Z" fill="#6aab6a" fill-opacity="0.92"/><rect x="834.0" y="409.3" width="7.0" height="7.0" fill="#5b9bc4" fill-opacity="0.92"/><rect x="851.5" y="409.3" width="7.0" height="7.0" fill="#5b9bc4" fill-opacity="0.92"/><circle cx="860.5" cy="407.7" r="3.5" fill="#bcdcb6" fill-opacity="0.92"/><path d="M860.5 416.3 L864.0 410.175 L857.0 410.175 Z" fill="#e5aab6" fill-opacity="0.92"/><path d="M864.4 405.8 L868.6 410.0 L864.4 414.2 L860.1999999999999 410.0 Z" fill="#b8444a" fill-opacity="0.92"/><path d="M872.6 389.4 L876.1 383.275 L869.1 383.275 Z" fill="#e5aab6" fill-opacity="0.92"/><circle cx="876.9" cy="410.5" r="3.5" fill="#bcdcb6" fill-opacity="0.92"/><path d="M892.25 402.08 H895.75 V404.35 H898.02 V407.85 H895.75 V410.12 H892.25 V407.85 H889.98 V404.35 H892.25 Z" fill="#f3dd97" stroke="#f3dd97" stroke-width="0.5" stroke-linejoin="round" fill-opacity="0.92"/><path d="M916.5 416.7 L920.0 410.575 L913.0 410.575 Z" fill="#e5aab6" fill-opacity="0.92"/><path d="M936.8 405.1 L941.0 409.3 L936.8 413.5 L932.5999999999999 409.3 Z" fill="#b8444a" fill-opacity="0.92"/><path d="M165.4 309 V431.3 H986" fill="none" stroke="#1e1e1e" stroke-width="1.15"/><path d="M159.5 431.0 H165.5" stroke="#222" stroke-width="1"/><path d="M162.0 424.4 H165.5" stroke="#222" stroke-width="1"/><path d="M162.0 417.8 H165.5" stroke="#222" stroke-width="1"/><path d="M162.0 411.2 H165.5" stroke="#222" stroke-width="1"/><path d="M162.0 404.6 H165.5" stroke="#222" stroke-width="1"/><path d="M159.5 398.0 H165.5" stroke="#222" stroke-width="1"/><path d="M162.0 391.4 H165.5" stroke="#222" stroke-width="1"/><path d="M162.0 384.8 H165.5" stroke="#222" stroke-width="1"/><path d="M162.0 378.2 H165.5" stroke="#222" stroke-width="1"/><path d="M162.0 371.6 H165.5" stroke="#222" stroke-width="1"/><path d="M159.5 365.0 H165.5" stroke="#222" stroke-width="1"/><path d="M162.0 358.4 H165.5" stroke="#222" stroke-width="1"/><path d="M162.0 351.8 H165.5" stroke="#222" stroke-width="1"/><path d="M162.0 345.2 H165.5" stroke="#222" stroke-width="1"/><path d="M162.0 338.6 H165.5" stroke="#222" stroke-width="1"/><path d="M159.5 332.0 H165.5" stroke="#222" stroke-width="1"/><path d="M162.0 325.4 H165.5" stroke="#222" stroke-width="1"/><path d="M162.0 318.8 H165.5" stroke="#222" stroke-width="1"/><path d="M162.0 312.2 H165.5" stroke="#222" stroke-width="1"/><path d="M174.0 431.3 V433.3" stroke="#222" stroke-width="1"/><path d="M185.2 431.3 V433.3" stroke="#222" stroke-width="1"/><path d="M196.4 431.3 V435.8" stroke="#222" stroke-width="1"/><path d="M207.6 431.3 V433.3" stroke="#222" stroke-width="1"/><path d="M218.8 431.3 V433.3" stroke="#222" stroke-width="1"/><path d="M230.0 431.3 V433.3" stroke="#222" stroke-width="1"/><path d="M241.3 431.3 V433.3" stroke="#222" stroke-width="1"/><path d="M252.5 431.3 V435.8" stroke="#222" stroke-width="1"/><path d="M263.7 431.3 V433.3" stroke="#222" stroke-width="1"/><path d="M274.9 431.3 V433.3" stroke="#222" stroke-width="1"/><path d="M286.1 431.3 V433.3" stroke="#222" stroke-width="1"/><path d="M297.3 431.3 V433.3" stroke="#222" stroke-width="1"/><path d="M308.6 431.3 V435.8" stroke="#222" stroke-width="1"/><path d="M319.8 431.3 V433.3" stroke="#222" stroke-width="1"/><path d="M331.0 431.3 V433.3" stroke="#222" stroke-width="1"/><path d="M342.2 431.3 V433.3" stroke="#222" stroke-width="1"/><path d="M353.4 431.3 V433.3" stroke="#222" stroke-width="1"/><path d="M364.6 431.3 V435.8" stroke="#222" stroke-width="1"/><path d="M375.9 431.3 V433.3" stroke="#222" stroke-width="1"/><path d="M387.1 431.3 V433.3" stroke="#222" stroke-width="1"/><path d="M398.3 431.3 V433.3" stroke="#222" stroke-width="1"/><path d="M409.5 431.3 V433.3" stroke="#222" stroke-width="1"/><path d="M420.7 431.3 V435.8" stroke="#222" stroke-width="1"/><path d="M431.9 431.3 V433.3" stroke="#222" stroke-width="1"/><path d="M443.2 431.3 V433.3" stroke="#222" stroke-width="1"/><path d="M454.4 431.3 V433.3" stroke="#222" stroke-width="1"/><path d="M465.6 431.3 V433.3" stroke="#222" stroke-width="1"/><path d="M476.8 431.3 V435.8" stroke="#222" stroke-width="1"/><path d="M488.0 431.3 V433.3" stroke="#222" stroke-width="1"/><path d="M499.2 431.3 V433.3" stroke="#222" stroke-width="1"/><path d="M510.4 431.3 V433.3" stroke="#222" stroke-width="1"/><path d="M521.7 431.3 V433.3" stroke="#222" stroke-width="1"/><path d="M532.9 431.3 V435.8" stroke="#222" stroke-width="1"/><path d="M544.1 431.3 V433.3" stroke="#222" stroke-width="1"/><path d="M555.3 431.3 V433.3" stroke="#222" stroke-width="1"/><path d="M566.5 431.3 V433.3" stroke="#222" stroke-width="1"/><path d="M577.7 431.3 V433.3" stroke="#222" stroke-width="1"/><path d="M589.0 431.3 V435.8" stroke="#222" stroke-width="1"/><path d="M600.2 431.3 V433.3" stroke="#222" stroke-width="1"/><path d="M611.4 431.3 V433.3" stroke="#222" stroke-width="1"/><path d="M622.6 431.3 V433.3" stroke="#222" stroke-width="1"/><path d="M633.8 431.3 V433.3" stroke="#222" stroke-width="1"/><path d="M645.0 431.3 V435.8" stroke="#222" stroke-width="1"/><path d="M656.3 431.3 V433.3" stroke="#222" stroke-width="1"/><path d="M667.5 431.3 V433.3" stroke="#222" stroke-width="1"/><path d="M678.7 431.3 V433.3" stroke="#222" stroke-width="1"/><path d="M689.9 431.3 V433.3" stroke="#222" stroke-width="1"/><path d="M701.1 431.3 V435.8" stroke="#222" stroke-width="1"/><path d="M712.3 431.3 V433.3" stroke="#222" stroke-width="1"/><path d="M723.6 431.3 V433.3" stroke="#222" stroke-width="1"/><path d="M734.8 431.3 V433.3" stroke="#222" stroke-width="1"/><path d="M746.0 431.3 V433.3" stroke="#222" stroke-width="1"/><path d="M757.2 431.3 V435.8" stroke="#222" stroke-width="1"/><path d="M768.4 431.3 V433.3" stroke="#222" stroke-width="1"/><path d="M779.6 431.3 V433.3" stroke="#222" stroke-width="1"/><path d="M790.8 431.3 V433.3" stroke="#222" stroke-width="1"/><path d="M802.1 431.3 V433.3" stroke="#222" stroke-width="1"/><path d="M813.3 431.3 V435.8" stroke="#222" stroke-width="1"/><path d="M824.5 431.3 V433.3" stroke="#222" stroke-width="1"/><path d="M835.7 431.3 V433.3" stroke="#222" stroke-width="1"/><path d="M846.9 431.3 V433.3" stroke="#222" stroke-width="1"/><path d="M858.1 431.3 V433.3" stroke="#222" stroke-width="1"/><path d="M869.4 431.3 V435.8" stroke="#222" stroke-width="1"/><path d="M880.6 431.3 V433.3" stroke="#222" stroke-width="1"/><path d="M891.8 431.3 V433.3" stroke="#222" stroke-width="1"/><path d="M903.0 431.3 V433.3" stroke="#222" stroke-width="1"/><path d="M914.2 431.3 V433.3" stroke="#222" stroke-width="1"/><path d="M925.4 431.3 V435.8" stroke="#222" stroke-width="1"/><path d="M936.7 431.3 V433.3" stroke="#222" stroke-width="1"/><path d="M947.9 431.3 V433.3" stroke="#222" stroke-width="1"/><path d="M959.1 431.3 V433.3" stroke="#222" stroke-width="1"/><path d="M970.3 431.3 V433.3" stroke="#222" stroke-width="1"/><path d="M981.5 431.3 V435.8" stroke="#222" stroke-width="1"/></svg>
<div class="a" style="left:147.6px;top:300px;width:20px;height:160px;overflow:hidden">
<div class="a" style="right:12.0px;top:126.58px;font-size:9px;color:#444;letter-spacing:0.2px">0</div>
<div class="a" style="right:12.0px;top:93.58px;font-size:9px;color:#444;letter-spacing:0.2px">10</div>
<div class="a" style="right:12.0px;top:60.58px;font-size:9px;color:#444;letter-spacing:0.2px">20</div>
<div class="a" style="right:12.0px;top:27.58px;font-size:9px;color:#444;letter-spacing:0.2px">30</div>
</div>
<div class="a" style="left:-3.60px;width:400px;text-align:center;top:439.98px;font-size:9px;color:#444;font-weight:normal;letter-spacing:0.3px;">0</div>
<div class="a" style="left:52.48px;width:400px;text-align:center;top:439.98px;font-size:9px;color:#444;font-weight:normal;letter-spacing:0.3px;">0.5</div>
<div class="a" style="left:108.56px;width:400px;text-align:center;top:439.98px;font-size:9px;color:#444;font-weight:normal;letter-spacing:0.3px;">1</div>
<div class="a" style="left:164.64px;width:400px;text-align:center;top:439.98px;font-size:9px;color:#444;font-weight:normal;letter-spacing:0.3px;">1.5</div>
<div class="a" style="left:220.72px;width:400px;text-align:center;top:439.98px;font-size:9px;color:#444;font-weight:normal;letter-spacing:0.3px;">2</div>
<div class="a" style="left:276.80px;width:400px;text-align:center;top:439.98px;font-size:9px;color:#444;font-weight:normal;letter-spacing:0.3px;">2.5</div>
<div class="a" style="left:332.88px;width:400px;text-align:center;top:439.98px;font-size:9px;color:#444;font-weight:normal;letter-spacing:0.3px;">3</div>
<div class="a" style="left:388.96px;width:400px;text-align:center;top:439.98px;font-size:9px;color:#444;font-weight:normal;letter-spacing:0.3px;">3.5</div>
<div class="a" style="left:445.04px;width:400px;text-align:center;top:439.98px;font-size:9px;color:#444;font-weight:normal;letter-spacing:0.3px;">4</div>
<div class="a" style="left:501.12px;width:400px;text-align:center;top:439.98px;font-size:9px;color:#444;font-weight:normal;letter-spacing:0.3px;">4.5</div>
<div class="a" style="left:557.20px;width:400px;text-align:center;top:439.98px;font-size:9px;color:#444;font-weight:normal;letter-spacing:0.3px;">5</div>
<div class="a" style="left:613.28px;width:400px;text-align:center;top:439.98px;font-size:9px;color:#444;font-weight:normal;letter-spacing:0.3px;">5.5</div>
<div class="a" style="left:669.36px;width:400px;text-align:center;top:439.98px;font-size:9px;color:#444;font-weight:normal;letter-spacing:0.3px;">6</div>
<div class="a" style="left:725.44px;width:400px;text-align:center;top:439.98px;font-size:9px;color:#444;font-weight:normal;letter-spacing:0.3px;">6.5</div>
<div class="a" style="left:781.52px;width:400px;text-align:center;top:439.98px;font-size:9px;color:#444;font-weight:normal;letter-spacing:0.3px;">7</div>
<div class="a" style="left:374.50px;width:400px;text-align:center;top:454.17px;font-size:12.2px;color:#444;font-weight:normal;letter-spacing:0.2px;">Weight</div>
</body></html>
